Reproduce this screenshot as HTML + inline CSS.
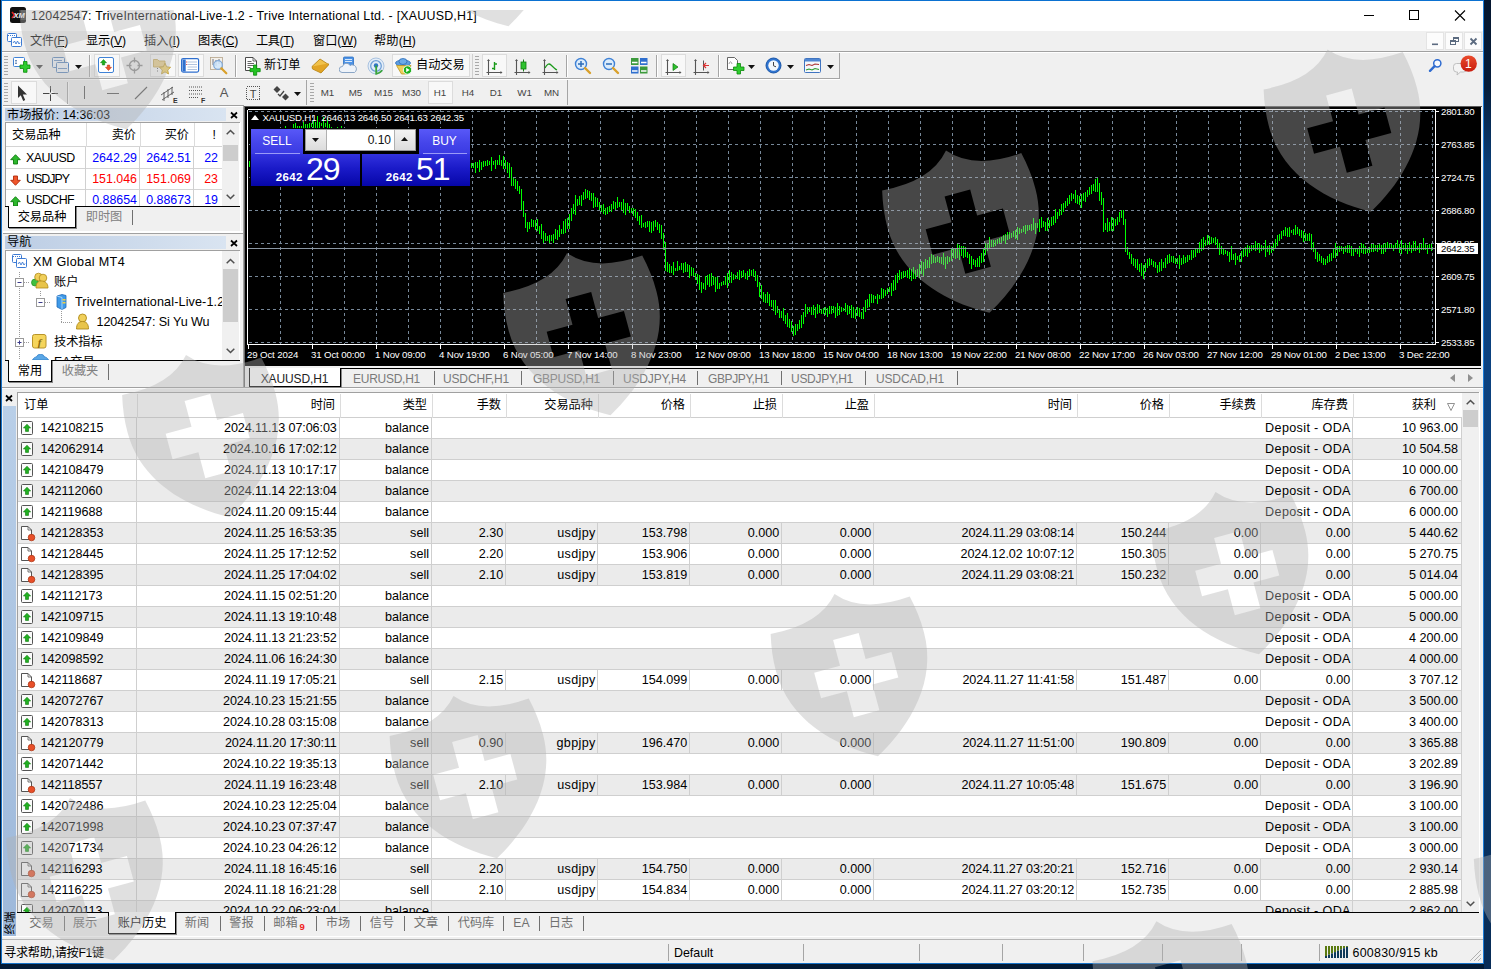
<!DOCTYPE html><html lang="zh"><head><meta charset="utf-8"><title>MT4</title><style>
html,body{margin:0;padding:0}
body{width:1491px;height:969px;position:relative;overflow:hidden;background:#031a34;font-family:"Liberation Sans","Noto Sans CJK SC",sans-serif;}
#root{position:absolute;left:0;top:0;width:1491px;height:969px;overflow:hidden;background:#031a34;}
#root div,#root i,#root span,#root svg{position:absolute;display:block}
.t{white-space:nowrap;font-family:"Liberation Sans","Noto Sans CJK SC",sans-serif;}
.c{font-family:"Liberation Sans",sans-serif;}
.h{height:23px;line-height:23px;font-size:12.200px;color:#000}
.r{height:21px;line-height:21px;font-size:12.600px;color:#000}
u{text-decoration:underline;text-underline-offset:1px}
</style></head><body><div id="root"><div style="left:1484px;top:0px;width:7px;height:969px;background:linear-gradient(180deg,#04162f 0%,#051d3b 9%,#0b3e76 17%,#0c4280 38%,#0a3869 70%,#082c57 100%);"></div><div style="left:2px;top:0px;width:1481px;height:963px;background:#f0f0f0;"></div><i style="left:1px;top:0px;width:1483px;height:1px;background:#0b71d1"></i><i style="left:1px;top:0px;width:1px;height:964px;background:#1672c8"></i><i style="left:1483px;top:0px;width:1px;height:964px;background:#1b7bd6"></i><i style="left:1px;top:963px;width:1483px;height:1px;background:#1672c8"></i>
<div style="left:2px;top:1px;width:1481px;height:30px;background:#fff;"></div><svg style="left:10px;top:7px" width="16" height="16" viewBox="0 0 16 16"><rect x="0" y="0" width="16" height="16" rx="2.5" fill="#111"/><rect x="11" y="3" width="5" height="10" fill="#3a3a3a"/><path d="M2 5 L4.5 8 L2 11" stroke="#e0251b" stroke-width="1.6" fill="none"/><text x="9" y="11" font-size="7.5" font-weight="bold" font-style="italic" fill="#fff" text-anchor="middle" font-family="Liberation Sans,sans-serif">XM</text></svg><span class="t ttl" style="top:6px;height:20px;line-height:20px;font-size:12.4px;color:#000;left:31px;letter-spacing:0.235px;">12042547: TriveInternational-Live-1.2 - Trive International Ltd. - [XAUUSD,H1]</span><svg style="left:1355px;top:5px" width="120" height="22" viewBox="0 0 120 22"><path d="M9 10.5 H19" stroke="#000" stroke-width="1"/><rect x="54.5" y="5.5" width="9" height="9" fill="none" stroke="#000" stroke-width="1"/><path d="M100 5.5 L110 15.5 M110 5.5 L100 15.5" stroke="#000" stroke-width="1.1"/></svg>
<div style="left:2px;top:31px;width:1481px;height:20px;background:#f0f0f0;"></div><svg style="left:7px;top:32px" width="16" height="16" viewBox="0 0 16 16"><rect x="0.5" y="1.5" width="9" height="8" rx="1" fill="#fff" stroke="#3d7bd4"/><path d="M1 3.5h8" stroke="#3d7bd4" stroke-dasharray="1 1"/><rect x="4.5" y="5.5" width="10" height="9" rx="1" fill="#fff" stroke="#3d7bd4"/><path d="M6 11 l1.5 -2 l1.5 3 l1.5 -3 l1.5 3 l1 -1.5" stroke="#3d7bd4" fill="none" stroke-width="0.9"/></svg><span class="t mn" style="top:31px;height:20px;line-height:20px;font-size:12.2px;color:#000;left:30px;letter-spacing:-0.391px;">文件(<u>F</u>)</span><span class="t mn" style="top:31px;height:20px;line-height:20px;font-size:12.2px;color:#000;left:86px;letter-spacing:-0.128px;">显示(<u>V</u>)</span><span class="t mn" style="top:31px;height:20px;line-height:20px;font-size:12.2px;color:#000;left:144px;letter-spacing:0.022px;">插入(<u>I</u>)</span><span class="t mn" style="top:31px;height:20px;line-height:20px;font-size:12.2px;color:#000;left:198px;letter-spacing:-0.263px;">图表(<u>C</u>)</span><span class="t mn" style="top:31px;height:20px;line-height:20px;font-size:12.2px;color:#000;left:256px;letter-spacing:-0.391px;">工具(<u>T</u>)</span><span class="t mn" style="top:31px;height:20px;line-height:20px;font-size:12.2px;color:#000;left:313px;letter-spacing:-0.003px;">窗口(<u>W</u>)</span><span class="t mn" style="top:31px;height:20px;line-height:20px;font-size:12.2px;color:#000;left:374px;letter-spacing:0.138px;">帮助(<u>H</u>)</span><div style="left:1426px;top:32px;width:18px;height:18px;background:#fcfcfc;border:1px solid #e4e4e4;box-sizing:border-box;"></div><div style="left:1445px;top:32px;width:18px;height:18px;background:#fcfcfc;border:1px solid #e4e4e4;box-sizing:border-box;"></div><div style="left:1464px;top:32px;width:18px;height:18px;background:#fcfcfc;border:1px solid #e4e4e4;box-sizing:border-box;"></div><svg style="left:1426.500px;top:32px" width="56" height="18" viewBox="0 0 56 18"><path d="M5 12.300h6" stroke="#5c6b80" stroke-width="1.6"/><g shape-rendering="crispEdges"><rect x="26.500" y="5.500" width="5" height="4" fill="#fcfcfc" stroke="#5c6b80" stroke-width="1"/><rect x="26" y="5" width="6" height="2" fill="#5c6b80"/><rect x="23.500" y="8.500" width="5" height="4" fill="#fcfcfc" stroke="#5c6b80" stroke-width="1"/><rect x="23" y="8" width="6" height="2" fill="#5c6b80"/></g><path d="M43.5 6.5l6 6M49.5 6.5l-6 6" stroke="#5c6b80" stroke-width="1.8"/></svg><i style="left:2px;top:51px;width:1481px;height:1px;background:#a0a0a0"></i><i style="left:2px;top:52px;width:1481px;height:1px;background:#ffffff"></i>
<div style="left:4px;top:56px;width:4px;height:20px;background:repeating-linear-gradient(180deg,#a8a8a8 0,#a8a8a8 1px,transparent 1px,transparent 3px);"></div><svg style="left:13px;top:57px" width="18" height="17" viewBox="0 0 18 17"><rect x="0.5" y="0.5" width="11" height="9" rx="1" fill="#fff" stroke="#3f82d6"/><path d="M3 3v4M2 4l1-1 1 1M2 6l1 1 1-1" stroke="#5a7fb0" stroke-width="0.8" fill="none"/><path d="M8.5 5h3.5v-3.5h3.5v3.5h3v3.5h-3v3.8h-3.5v-3.8h-3.5z" transform="translate(-1.5,3)" fill="#2ecc2e" stroke="#0a8a0a" stroke-width="0.8"/></svg><svg style="left:36px;top:65px" width="7" height="4" viewBox="0 0 7 4"><path d="M0 0h7L3.5 4z" fill="#444"/></svg><svg style="left:52px;top:57px" width="18" height="17" viewBox="0 0 18 17"><rect x="0.5" y="0.5" width="12" height="10" rx="1" fill="#eef3fa" stroke="#5b86bd"/><rect x="4.5" y="5.5" width="12" height="10" rx="1" fill="#eef3fa" stroke="#5b86bd"/><path d="M2 3.5h8M6 11.5h9" stroke="#5b86bd" stroke-width="0.9"/></svg><svg style="left:75px;top:65px" width="7" height="4" viewBox="0 0 7 4"><path d="M0 0h7L3.5 4z" fill="#111"/></svg><i style="left:89px;top:55px;width:1px;height:22px;background:#a5a5a5"></i><i style="left:90px;top:55px;width:1px;height:22px;background:#ffffff"></i><div style="left:94px;top:54px;width:26px;height:23px;background:#f8f8f8;border:1px solid #dcdcdc;box-sizing:border-box;"></div><svg style="left:98px;top:57px" width="17" height="17" viewBox="0 0 17 17"><rect x="0.5" y="0.5" width="15" height="15" rx="1.5" fill="#fff" stroke="#3f82d6"/><path d="M5.5 2.5l3 3.2h-1.8v2.3h-2.4v-2.3h-1.8z" fill="#1db01d" stroke="#0a7a0a" stroke-width="0.5"/><path d="M10.5 13.5l3-3.2h-1.8v-2.3h-2.4v2.3h-1.8z" fill="#f0522a" stroke="#b52a0a" stroke-width="0.5"/></svg><svg style="left:126px;top:57px" width="17" height="17" viewBox="0 0 17 17"><circle cx="8.5" cy="8.5" r="5" fill="none" stroke="#8a8a8a" stroke-width="1.3"/><path d="M8.5 0.5v5M8.5 11.5v5M0.5 8.5h5M11.5 8.5h5" stroke="#8a8a8a" stroke-width="1.3"/></svg><div style="left:150px;top:54px;width:26px;height:23px;background:#f8f8f8;border:1px solid #dcdcdc;box-sizing:border-box;"></div><svg style="left:153px;top:56px" width="19" height="19" viewBox="0 0 19 19"><path d="M0.5 3.5h4l1.5 1.5h6v6h-11.5z" fill="#e9cf8a" stroke="#c2a24a" stroke-width="0.8"/><path d="M12 7.2l1.7 3.6 3.9 0.5-2.9 2.7 0.8 3.9-3.5-2-3.5 2 0.8-3.9-2.9-2.7 3.9-0.5z" fill="#f2d36b" stroke="#b8962e" stroke-width="0.8"/><path d="M4.5 12v5" stroke="#666" stroke-dasharray="1 1.5"/></svg><div style="left:178px;top:54px;width:26px;height:23px;background:#f8f8f8;border:1px solid #dcdcdc;box-sizing:border-box;"></div><svg style="left:181px;top:58px" width="19" height="15" viewBox="0 0 19 15"><rect x="0.6" y="0.6" width="17" height="13.5" rx="1.5" fill="#fff" stroke="#2f6fce" stroke-width="1.2"/><rect x="1.5" y="1.5" width="3.2" height="12" fill="#2f6fce"/><path d="M6.5 4h9.5M6.5 6.5h9.5M6.5 9h9.5M6.5 11.5h9.5" stroke="#9db4d6" stroke-width="0.8"/><path d="M5.2 4h1M5.2 6.500h1" stroke="#d33" stroke-width="1"/></svg><svg style="left:210px;top:57px" width="19" height="19" viewBox="0 0 19 19"><rect x="0.5" y="0.5" width="12" height="12" fill="#f3f0ea" stroke="#b5a58a" stroke-width="0.8"/><path d="M3 2v6M6 3v6M9 2v5" stroke="#667" stroke-width="0.9"/><circle cx="8" cy="8" r="4.3" fill="#cfe6fb" fill-opacity="0.85" stroke="#7fa8d8" stroke-width="1.2"/><path d="M11.3 11.3l5 5" stroke="#d9a02a" stroke-width="2.2" stroke-linecap="round"/></svg><i style="left:235px;top:55px;width:1px;height:22px;background:#a5a5a5"></i><i style="left:236px;top:55px;width:1px;height:22px;background:#ffffff"></i><svg style="left:245px;top:57px" width="19" height="19" viewBox="0 0 19 19"><path d="M0.500 0.500h7.500l3.500 3.500v9.500h-11z" fill="#fdfdfd" stroke="#4a4a4a" stroke-width="1"/><path d="M8 0.500v3.500h3.500" fill="none" stroke="#4a4a4a" stroke-width="0.800"/><path d="M2.500 4.500h4M2.500 6.500h6.500M2.500 8.500h6.500M2.500 10.500h3" stroke="#555" stroke-width="0.900"/><path d="M5 11.500h3.500v-3.500h3.200v3.500h3.500v3.200h-3.500v3.500h-3.200v-3.500h-3.500z" fill="#22c322" stroke="#0a8a0a" stroke-width="0.800"/></svg><span class="t" style="top:54px;height:22px;line-height:22px;font-size:12.2px;color:#000;left:264px;">新订单</span><svg style="left:311px;top:58px" width="19" height="16" viewBox="0 0 19 16"><path d="M1 8.500l8-7.500 8.500 5.500-7.500 8z" fill="#f1c24b" stroke="#b88618" stroke-width="0.9"/><path d="M1 8.500l0.500 2.500 8.500 4 7.500-8-0.200-1.500" fill="#e2a526" stroke="#b88618" stroke-width="0.8"/></svg><svg style="left:339px;top:56px" width="19" height="19" viewBox="0 0 19 19"><rect x="4.500" y="1" width="10" height="10" rx="1" fill="#4d93e6" stroke="#2b6ec2" stroke-width="0.8"/><path d="M6 3.500h7M6 5.500h7" stroke="#d6e8fb" stroke-width="1"/><path d="M3 16.500a3 3 0 0 1 0.500-6 4 4 0 0 1 7.500-1 3.500 3.500 0 0 1 4.500 7z" fill="#eef3f9" stroke="#7e9cc0" stroke-width="0.9"/></svg><svg style="left:367px;top:57px" width="19" height="19" viewBox="0 0 19 19"><circle cx="9" cy="9" r="8" fill="#e3edf8" stroke="#a9c2e0" stroke-width="1"/><circle cx="9" cy="9" r="5.300" fill="none" stroke="#6f9fd6" stroke-width="1.300"/><circle cx="9" cy="8.500" r="2.200" fill="#2f74c6"/><path d="M9.200 8.500v8.300c2.500-0.300 4.500-1.500 6-3.500" fill="none" stroke="#3aa53a" stroke-width="1.800"/></svg><div style="left:392px;top:54px;width:78px;height:23px;background:#f8f8f8;border:1px solid #dcdcdc;box-sizing:border-box;"></div><svg style="left:395px;top:57px" width="19" height="19" viewBox="0 0 19 19"><ellipse cx="8" cy="6" rx="7.500" ry="3" fill="#5d9ee0" stroke="#2d6cb8" stroke-width="0.8"/><ellipse cx="8" cy="4.500" rx="4" ry="3" fill="#6baae8" stroke="#2d6cb8" stroke-width="0.8"/><path d="M1.500 8.500l5 8.500h6l3.500-8.500z" fill="#f0cf5a" stroke="#b89522" stroke-width="0.8"/><circle cx="12.500" cy="13" r="4.200" fill="#1fb11f" stroke="#fff" stroke-width="0.9"/><path d="M11.200 10.800l3.500 2.200-3.500 2.200z" fill="#fff"/></svg><span class="t" style="top:54px;height:22px;line-height:22px;font-size:12.2px;color:#000;left:416px;">自动交易</span><i style="left:472px;top:54px;width:1px;height:24px;background:#cfcfcf"></i><div style="left:475px;top:56px;width:4px;height:20px;background:repeating-linear-gradient(180deg,#a8a8a8 0,#a8a8a8 1px,transparent 1px,transparent 3px);"></div><div style="left:482px;top:54px;width:25px;height:23px;background:#f8f8f8;border:1px solid #dcdcdc;box-sizing:border-box;"></div><svg style="left:486px;top:58.5px" width="17" height="17" viewBox="0 0 17 17"><path d="M2.500 1v15M0.500 13.500h15" stroke="#555" stroke-width="1.1"/><path d="M2.500 0l-1.500 2h3zM16.500 13.500l-2-1.500v3z" fill="#555"/><path d="M8.500 3v8M8.500 5h2.500M6 9.500h2.500" stroke="#1a9a1a" stroke-width="1.4"/></svg><svg style="left:514px;top:58.5px" width="17" height="17" viewBox="0 0 17 17"><path d="M2.500 1v15M0.500 13.500h15" stroke="#555" stroke-width="1.1"/><path d="M2.500 0l-1.500 2h3zM16.500 13.500l-2-1.500v3z" fill="#555"/><path d="M9.500 0.500v12" stroke="#1a7a1a" stroke-width="1"/><rect x="7" y="3" width="5" height="7" fill="#2fc22f" stroke="#0d7a0d" stroke-width="0.8"/></svg><svg style="left:542px;top:58.5px" width="17" height="17" viewBox="0 0 17 17"><path d="M2.500 1v15M0.500 13.500h15" stroke="#555" stroke-width="1.1"/><path d="M2.500 0l-1.500 2h3zM16.500 13.500l-2-1.500v3z" fill="#555"/><path d="M3 9c2-4 4-5 6-3s4 4 6 5" fill="none" stroke="#1a9a1a" stroke-width="1.3"/></svg><i style="left:566px;top:55px;width:1px;height:22px;background:#a5a5a5"></i><i style="left:567px;top:55px;width:1px;height:22px;background:#ffffff"></i><svg style="left:574px;top:57px" width="18" height="18" viewBox="0 0 18 18"><circle cx="7" cy="7" r="5.500" fill="#dcecfb" stroke="#3f82d6" stroke-width="1.400"/><path d="M11 11l5 5" stroke="#d9a02a" stroke-width="2.400" stroke-linecap="round"/><path d="M4 7h6M7 4v6" stroke="#2d6cb8" stroke-width="1.500"/></svg><svg style="left:602px;top:57px" width="18" height="18" viewBox="0 0 18 18"><circle cx="7" cy="7" r="5.500" fill="#dcecfb" stroke="#3f82d6" stroke-width="1.400"/><path d="M11 11l5 5" stroke="#d9a02a" stroke-width="2.400" stroke-linecap="round"/><path d="M4 7h6" stroke="#2d6cb8" stroke-width="1.500"/></svg><svg style="left:631px;top:58px" width="17" height="16" viewBox="0 0 17 16"><rect x="0" y="0" width="7.500" height="7" fill="#3c9a3c"/><rect x="9" y="0" width="7.500" height="7" fill="#2f6fce"/><rect x="0" y="8.500" width="7.500" height="7" fill="#2f6fce"/><rect x="9" y="8.500" width="7.500" height="7" fill="#3c9a3c"/><path d="M1 4.500h5.500M10 4.500h5.500M1 13h5.500M10 13h5.500" stroke="#fff" stroke-width="1.600"/></svg><i style="left:656px;top:55px;width:1px;height:22px;background:#a5a5a5"></i><i style="left:657px;top:55px;width:1px;height:22px;background:#ffffff"></i><div style="left:661px;top:54px;width:25px;height:23px;background:#f8f8f8;border:1px solid #dcdcdc;box-sizing:border-box;"></div><svg style="left:665px;top:58.5px" width="17" height="17" viewBox="0 0 17 17"><path d="M2.500 1v15M0.500 13.500h15" stroke="#555" stroke-width="1.1"/><path d="M2.500 0l-1.500 2h3zM16.500 13.500l-2-1.500v3z" fill="#555"/><path d="M8 4.500l5 3.500-5 3.500z" fill="#2fc22f" stroke="#0d7a0d" stroke-width="0.700"/></svg><svg style="left:693px;top:58.5px" width="17" height="17" viewBox="0 0 17 17"><path d="M2.500 1v15M0.500 13.500h15" stroke="#555" stroke-width="1.1"/><path d="M2.500 0l-1.500 2h3zM16.500 13.500l-2-1.500v3z" fill="#555"/><path d="M10.500 1.500v10" stroke="#555" stroke-width="1"/><path d="M16 6.500h-5M13 4l-2.500 2.500 2.500 2.500" stroke="#d33" stroke-width="1.200" fill="none"/></svg><i style="left:718px;top:55px;width:1px;height:22px;background:#a5a5a5"></i><i style="left:719px;top:55px;width:1px;height:22px;background:#ffffff"></i><svg style="left:727px;top:56px" width="19" height="19" viewBox="0 0 19 19"><path d="M0.500 1.500h7l3 3v9h-10z" fill="#fff" stroke="#555" stroke-width="0.900"/><path d="M2 8c1-3 2-3 3 0" stroke="#888" fill="none" stroke-width="0.800"/><path d="M6.500 11h3.500v-3.500h3.500v3.500h3.500v3.500h-3.500v3.500h-3.500v-3.500h-3.500z" fill="#2ecc2e" stroke="#0a8a0a" stroke-width="0.800"/></svg><svg style="left:748px;top:65px" width="7" height="4" viewBox="0 0 7 4"><path d="M0 0h7L3.5 4z" fill="#111"/></svg><svg style="left:765px;top:57px" width="18" height="18" viewBox="0 0 18 18"><circle cx="8.500" cy="8.500" r="7.500" fill="#2f74d0" stroke="#1a56a8" stroke-width="1"/><circle cx="8.500" cy="8.500" r="5.200" fill="#f4f8fc"/><path d="M8.500 5v3.800l2.500 1" stroke="#444" stroke-width="1" fill="none"/></svg><svg style="left:787px;top:65px" width="7" height="4" viewBox="0 0 7 4"><path d="M0 0h7L3.5 4z" fill="#111"/></svg><svg style="left:804px;top:58px" width="17" height="15" viewBox="0 0 17 15"><rect x="0.500" y="0.500" width="16" height="14" rx="1" fill="#f6f8fb" stroke="#3f74c0" stroke-width="1"/><rect x="1" y="1" width="15" height="2.500" fill="#4f86d2"/><path d="M2 7.500l3-1 3 1 3-1.500 4 0.500" stroke="#a33" stroke-width="1.100" fill="none"/><path d="M2 12l3-1 3 1 3-1.500 4 1" stroke="#2a9a2a" stroke-width="1.100" fill="none"/></svg><svg style="left:827px;top:65px" width="7" height="4" viewBox="0 0 7 4"><path d="M0 0h7L3.5 4z" fill="#111"/></svg><i style="left:839px;top:53px;width:1px;height:26px;background:#a5a5a5"></i><i style="left:475px;top:78px;width:365px;height:1px;background:#a5a5a5"></i><svg style="left:1427px;top:57px" width="18" height="18" viewBox="0 0 18 18"><circle cx="10.300" cy="6.300" r="3.600" fill="#f6f9fe" stroke="#2e6bd0" stroke-width="1.500"/><path d="M7.600 9.200l-4.600 4.600" stroke="#2e6bd0" stroke-width="2.400" stroke-linecap="round"/></svg><svg style="left:1451px;top:54px" width="28" height="24" viewBox="0 0 28 24"><defs><linearGradient id="bdg" x1="0" y1="0" x2="0" y2="1"><stop offset="0" stop-color="#ea4c2c"/><stop offset="1" stop-color="#c81c0e"/></linearGradient></defs><path d="M5.500 9.500h7a3 3 0 0 1 3 3v2.500a3 3 0 0 1-3 3h-3l-3.500 3 0.500-3h-1a3 3 0 0 1-3-3v-2.500a3 3 0 0 1 3-3z" fill="#f4f4f4" stroke="#b9b9b9" stroke-width="0.900"/><circle cx="17.700" cy="9.600" r="8.200" fill="url(#bdg)"/><text x="17.400" y="14" font-size="12" fill="#fff" text-anchor="middle" font-family="Liberation Sans,sans-serif">1</text></svg><i style="left:2px;top:78px;width:473px;height:1px;background:#a5a5a5"></i><i style="left:2px;top:79px;width:838px;height:1px;background:#ffffff"></i>
<div style="left:4px;top:83px;width:4px;height:20px;background:repeating-linear-gradient(180deg,#a8a8a8 0,#a8a8a8 1px,transparent 1px,transparent 3px);"></div><div style="left:11px;top:81px;width:26px;height:23px;background:#f8f8f8;border:1px solid #dcdcdc;box-sizing:border-box;"></div><svg style="left:17px;top:85px" width="12" height="17" viewBox="0 0 12 17"><path d="M1 0.500l9 9h-4.200l2.400 5.500-2 0.900-2.400-5.600-2.800 2.800z" fill="#333"/></svg><svg style="left:42px;top:85px" width="17" height="17" viewBox="0 0 17 17"><path d="M8.500 1v15M1 8.500h15" stroke="#444" stroke-width="1"/><rect x="7.500" y="7.500" width="2" height="2" fill="#f0f0f0"/></svg><i style="left:67px;top:82px;width:1px;height:22px;background:#a5a5a5"></i><i style="left:68px;top:82px;width:1px;height:22px;background:#ffffff"></i><i style="left:84px;top:86px;width:1px;height:13px;background:#555"></i><i style="left:107px;top:93px;width:12px;height:1px;background:#555"></i><svg style="left:134px;top:86px" width="14" height="14" viewBox="0 0 14 14"><path d="M1 13L13 1" stroke="#555" stroke-width="1.100"/></svg><svg style="left:160px;top:85px" width="19" height="19" viewBox="0 0 19 19"><path d="M1 10L13 2M2 15L14 7M4 7v9M8 4v9M12 2v8" stroke="#555" stroke-width="0.900"/><text x="13" y="18" font-size="7" font-weight="bold" fill="#333" font-family="Liberation Sans,sans-serif">E</text></svg><svg style="left:189px;top:86px" width="19" height="18" viewBox="0 0 19 18"><path d="M0 1h13M0 4.500h13M0 8h13M0 11.500h9" stroke="#555" stroke-width="1" stroke-dasharray="1 1"/><text x="12" y="17" font-size="7" font-weight="bold" fill="#333" font-family="Liberation Sans,sans-serif">F</text></svg><span class="t" style="top:82px;height:22px;line-height:22px;font-size:13px;color:#555;left:214.0px;width:20px;text-align:center;">A</span><svg style="left:246px;top:85px" width="15" height="16" viewBox="0 0 15 16"><rect x="0.500" y="1.500" width="13" height="13" fill="none" stroke="#555" stroke-dasharray="1 1" shape-rendering="crispEdges"/><text x="7" y="13" font-size="11" fill="#444" text-anchor="middle" font-family="Liberation Sans,sans-serif">T</text></svg><svg style="left:273px;top:86px" width="17" height="15" viewBox="0 0 17 15"><path d="M4 0l3.500 3.500-3.500 3.500-3.500-3.500z" fill="#444"/><path d="M12.500 7.500l3.500 3.500-3.500 3.500-3.500-3.500z" fill="#444"/><path d="M5 8l2 2 4-5" stroke="#444" stroke-width="1.300" fill="none"/></svg><svg style="left:294px;top:92px" width="7" height="4" viewBox="0 0 7 4"><path d="M0 0h7L3.5 4z" fill="#111"/></svg><i style="left:306px;top:80px;width:1px;height:25px;background:#a5a5a5"></i><div style="left:310px;top:83px;width:4px;height:20px;background:repeating-linear-gradient(180deg,#a8a8a8 0,#a8a8a8 1px,transparent 1px,transparent 3px);"></div><div style="left:428px;top:81px;width:25px;height:23px;background:#f8f8f8;border:1px solid #dcdcdc;box-sizing:border-box;"></div><span class="t" style="top:82px;height:22px;line-height:22px;font-size:9.8px;color:#444;left:312.5px;width:30px;text-align:center;">M1</span><span class="t" style="top:82px;height:22px;line-height:22px;font-size:9.8px;color:#444;left:340.5px;width:30px;text-align:center;">M5</span><span class="t" style="top:82px;height:22px;line-height:22px;font-size:9.8px;color:#444;left:368.5px;width:30px;text-align:center;">M15</span><span class="t" style="top:82px;height:22px;line-height:22px;font-size:9.8px;color:#444;left:396.5px;width:30px;text-align:center;">M30</span><span class="t" style="top:82px;height:22px;line-height:22px;font-size:9.8px;color:#444;left:425.0px;width:30px;text-align:center;">H1</span><span class="t" style="top:82px;height:22px;line-height:22px;font-size:9.8px;color:#444;left:453.0px;width:30px;text-align:center;">H4</span><span class="t" style="top:82px;height:22px;line-height:22px;font-size:9.8px;color:#444;left:481.0px;width:30px;text-align:center;">D1</span><span class="t" style="top:82px;height:22px;line-height:22px;font-size:9.8px;color:#444;left:509.5px;width:30px;text-align:center;">W1</span><span class="t" style="top:82px;height:22px;line-height:22px;font-size:9.8px;color:#444;left:536.5px;width:30px;text-align:center;">MN</span><i style="left:567px;top:80px;width:1px;height:25px;background:#a5a5a5"></i>
<i style="left:3px;top:105px;width:241px;height:1px;background:#a0a0a0"></i><i style="left:3px;top:106px;width:241px;height:1px;background:#fff"></i><div style="left:5px;top:108px;width:221px;height:13px;background:linear-gradient(90deg,#bccde4,#d9e4f1);"></div><span class="t" style="top:106px;height:18px;line-height:18px;font-size:12.2px;color:#000;left:7px;">市场报价: 14:36:03</span><svg style="left:229.5px;top:110.5px" width="8" height="8" viewBox="0 0 8 8"><path d="M1 1.500l6 5.500M7 1.500l-6 5.500" stroke="#000" stroke-width="1.700"/></svg><div style="left:5px;top:122px;width:235px;height:85px;background:#fff;border-left:1px solid #a0a0a0;border-top:1px solid #a0a0a0;box-sizing:border-box;"></div><div style="left:222px;top:123px;width:17px;height:83px;background:#f0f0f0;"></div><svg style="left:226px;top:129px" width="9" height="6" viewBox="0 0 9 6"><path d="M0.700 5.300l3.800-3.800 3.800 3.800" fill="none" stroke="#505050" stroke-width="1.500"/></svg><svg style="left:226px;top:194px" width="9" height="6" viewBox="0 0 9 6"><path d="M0.700 0.700l3.800 3.800 3.800-3.800" fill="none" stroke="#505050" stroke-width="1.500"/></svg><div style="left:223px;top:145px;width:15px;height:16px;background:#cdcdcd;"></div><i style="left:6px;top:146px;width:216px;height:1px;background:#d4d4d4"></i><i style="left:6px;top:168px;width:216px;height:1px;background:#d4d4d4"></i><i style="left:6px;top:189px;width:216px;height:1px;background:#d4d4d4"></i><i style="left:86px;top:123px;width:1px;height:24px;background:#dcdcdc"></i><i style="left:85px;top:147px;width:1px;height:59px;background:#d0d0d0"></i><i style="left:140px;top:123px;width:1px;height:24px;background:#dcdcdc"></i><i style="left:139px;top:147px;width:1px;height:59px;background:#d0d0d0"></i><i style="left:194px;top:123px;width:1px;height:24px;background:#dcdcdc"></i><i style="left:193px;top:147px;width:1px;height:59px;background:#d0d0d0"></i><span class="t" style="top:124px;height:22px;line-height:22px;font-size:12.2px;color:#000;left:12px;">交易品种</span><span class="t" style="top:124px;height:22px;line-height:22px;font-size:12.2px;color:#000;right:1355px;text-align:right;">卖价</span><span class="t" style="top:124px;height:22px;line-height:22px;font-size:12.2px;color:#000;right:1302px;text-align:right;">买价</span><span class="t" style="top:124px;height:22px;line-height:22px;font-size:12.2px;color:#000;right:1275px;text-align:right;">!</span><svg style="left:10px;top:154px" width="11" height="11" viewBox="0 0 11 11"><path d="M5.500 0.700l4.800 5h-2.800v4.300h-4v-4.300h-2.800z" fill="#2db82d" stroke="#0c7a0c" stroke-width="0.900"/></svg><span class="t" style="top:148px;height:21px;line-height:21px;font-size:12.4px;color:#000;left:26px;letter-spacing:-0.507px;">XAUUSD</span><span class="t" style="top:148px;height:21px;line-height:21px;font-size:12.4px;color:#0000ff;right:1354px;text-align:right;">2642.29</span><span class="t" style="top:148px;height:21px;line-height:21px;font-size:12.4px;color:#0000ff;right:1300px;text-align:right;">2642.51</span><span class="t" style="top:148px;height:21px;line-height:21px;font-size:12.4px;color:#0000ff;right:1273px;text-align:right;">22</span><svg style="left:10px;top:175px" width="11" height="11" viewBox="0 0 11 11"><path d="M5.500 10.300l4.800-5h-2.800v-4.300h-4v4.300h-2.800z" fill="#f0552a" stroke="#b02a0a" stroke-width="0.900"/></svg><span class="t" style="top:169px;height:21px;line-height:21px;font-size:12.4px;color:#000;left:26px;letter-spacing:-0.982px;">USDJPY</span><span class="t" style="top:169px;height:21px;line-height:21px;font-size:12.4px;color:#ff0000;right:1354px;text-align:right;">151.046</span><span class="t" style="top:169px;height:21px;line-height:21px;font-size:12.4px;color:#ff0000;right:1300px;text-align:right;">151.069</span><span class="t" style="top:169px;height:21px;line-height:21px;font-size:12.4px;color:#ff0000;right:1273px;text-align:right;">23</span><svg style="left:10px;top:196px" width="11" height="11" viewBox="0 0 11 11"><path d="M5.500 0.700l4.800 5h-2.800v4.300h-4v-4.300h-2.800z" fill="#2db82d" stroke="#0c7a0c" stroke-width="0.900"/></svg><span class="t" style="top:190px;height:21px;line-height:21px;font-size:12.4px;color:#000;left:26px;letter-spacing:-0.607px;">USDCHF</span><span class="t" style="top:190px;height:21px;line-height:21px;font-size:12.4px;color:#0000ff;right:1354px;text-align:right;">0.88654</span><span class="t" style="top:190px;height:21px;line-height:21px;font-size:12.4px;color:#0000ff;right:1300px;text-align:right;">0.88673</span><span class="t" style="top:190px;height:21px;line-height:21px;font-size:12.4px;color:#0000ff;right:1273px;text-align:right;">19</span><div style="left:5px;top:206px;width:235px;height:25px;background:#f0f0f0;"></div><i style="left:5px;top:206px;width:235px;height:1px;background:#000"></i><div style="left:8px;top:206px;width:68px;height:22px;background:#fff;border:1px solid #000;border-top:none;box-sizing:border-box;box-shadow:1px 1px 0 #888;"></div><span class="t" style="top:207px;height:21px;line-height:21px;font-size:12.2px;color:#000;left:9.0px;width:66px;text-align:center;">交易品种</span><span class="t" style="top:207px;height:21px;line-height:21px;font-size:12.2px;color:#808080;left:79.0px;width:50px;text-align:center;">即时图</span><i style="left:132px;top:210px;width:1px;height:15px;background:#707070"></i><i style="left:240px;top:122px;width:1px;height:110px;background:#fff"></i><i style="left:3px;top:231px;width:240px;height:2px;background:#fff"></i><i style="left:3px;top:233px;width:240px;height:1px;background:#a0a0a0"></i><i style="left:243px;top:106px;width:1px;height:281px;background:#a0a0a0"></i><i style="left:244px;top:106px;width:1px;height:281px;background:#696969"></i>
<div style="left:5px;top:236px;width:221px;height:13px;background:linear-gradient(90deg,#bccde4,#d9e4f1);"></div><span class="t" style="top:233px;height:18px;line-height:18px;font-size:12.2px;color:#000;left:7px;">导航</span><svg style="left:229.5px;top:238.5px" width="8" height="8" viewBox="0 0 8 8"><path d="M1 1.500l6 5.500M7 1.500l-6 5.500" stroke="#000" stroke-width="1.700"/></svg><div style="left:5px;top:250px;width:235px;height:111px;background:#fff;border-left:1px solid #a0a0a0;border-top:1px solid #a0a0a0;box-sizing:border-box;"></div><div style="left:222px;top:251px;width:17px;height:109px;background:#f0f0f0;"></div><svg style="left:226px;top:258px" width="9" height="6" viewBox="0 0 9 6"><path d="M0.700 5.300l3.800-3.800 3.800 3.800" fill="none" stroke="#505050" stroke-width="1.500"/></svg><svg style="left:226px;top:348px" width="9" height="6" viewBox="0 0 9 6"><path d="M0.700 0.700l3.800 3.800 3.800-3.800" fill="none" stroke="#505050" stroke-width="1.500"/></svg><div style="left:223px;top:269px;width:15px;height:53px;background:#cdcdcd;"></div><div style="left:19px;top:272px;width:1px;height:90px;background:repeating-linear-gradient(180deg,#9a9a9a 0,#9a9a9a 1px,transparent 1px,transparent 2px);"></div><div style="left:24px;top:282px;width:6px;height:1px;background:repeating-linear-gradient(90deg,#9a9a9a 0,#9a9a9a 1px,transparent 1px,transparent 2px);"></div><div style="left:40px;top:291px;width:1px;height:6px;background:repeating-linear-gradient(180deg,#9a9a9a 0,#9a9a9a 1px,transparent 1px,transparent 2px);"></div><div style="left:45px;top:302px;width:6px;height:1px;background:repeating-linear-gradient(90deg,#9a9a9a 0,#9a9a9a 1px,transparent 1px,transparent 2px);"></div><div style="left:61px;top:311px;width:1px;height:11px;background:repeating-linear-gradient(180deg,#9a9a9a 0,#9a9a9a 1px,transparent 1px,transparent 2px);"></div><div style="left:61px;top:322px;width:11px;height:1px;background:repeating-linear-gradient(90deg,#9a9a9a 0,#9a9a9a 1px,transparent 1px,transparent 2px);"></div><div style="left:24px;top:342px;width:6px;height:1px;background:repeating-linear-gradient(90deg,#9a9a9a 0,#9a9a9a 1px,transparent 1px,transparent 2px);"></div><svg style="left:15px;top:278px" width="9" height="9" viewBox="0 0 9 9"><rect x="0.500" y="0.500" width="8" height="8" fill="#fff" stroke="#9a9a9a"/><path d="M2.500 4.500h4" stroke="#3a3a8a" stroke-width="1"/></svg><svg style="left:36px;top:298px" width="9" height="9" viewBox="0 0 9 9"><rect x="0.500" y="0.500" width="8" height="8" fill="#fff" stroke="#9a9a9a"/><path d="M2.500 4.500h4" stroke="#3a3a8a" stroke-width="1"/></svg><svg style="left:15px;top:338px" width="9" height="9" viewBox="0 0 9 9"><rect x="0.500" y="0.500" width="8" height="8" fill="#fff" stroke="#9a9a9a"/><path d="M2.500 4.500h4" stroke="#3a3a8a" stroke-width="1"/><path d="M4.500 2.500v4" stroke="#3a3a8a" stroke-width="1"/></svg><svg style="left:12px;top:253px" width="16" height="16" viewBox="0 0 16 16"><rect x="0.500" y="1.500" width="9" height="8" rx="1" fill="#fff" stroke="#3d7bd4"/><path d="M1 3.500h8" stroke="#3d7bd4" stroke-dasharray="1 1"/><rect x="4.500" y="5.500" width="10" height="9" rx="1" fill="#fff" stroke="#3d7bd4"/><path d="M6 11l1.500-2 1.500 3 1.500-3 1.500 3 1-1.500" stroke="#3d7bd4" fill="none" stroke-width="0.900"/></svg><svg style="left:31px;top:272px" width="18" height="17" viewBox="0 0 18 17"><circle cx="4" cy="10.500" r="3.500" fill="#3fbf3f" stroke="#1f8a1f" stroke-width="0.700"/><circle cx="7.500" cy="5" r="3.800" fill="#f0cf5a" stroke="#b08a1a" stroke-width="0.800"/><circle cx="12" cy="6" r="3.800" fill="#f0cf5a" stroke="#b08a1a" stroke-width="0.800"/><path d="M5 16c0-5 2-7 5.500-7s6.500 2 6.500 7z" fill="#e8c44a" stroke="#b08a1a" stroke-width="0.800"/></svg><svg style="left:55px;top:294px" width="12" height="16" viewBox="0 0 12 16"><path d="M2 2l5-1.500 4 1v12l-4 2-5-2.500z" fill="#3f9ae8" stroke="#1f6ab8" stroke-width="0.800"/><path d="M2 2l5 1.500v12" fill="none" stroke="#bfe0ff" stroke-width="0.800"/><rect x="7.500" y="5" width="3" height="1.500" fill="#f0d040"/><rect x="7.500" y="8" width="3" height="1.500" fill="#f0d040"/></svg><svg style="left:76px;top:313px" width="13" height="17" viewBox="0 0 13 17"><circle cx="6.500" cy="5" r="4" fill="#f0cf5a" stroke="#b08a1a" stroke-width="0.900"/><path d="M0.500 16c0-5 2-7.500 6-7.500s6 2.500 6 7.500z" fill="#e8c44a" stroke="#b08a1a" stroke-width="0.900"/></svg><svg style="left:32px;top:334px" width="15" height="15" viewBox="0 0 15 15"><rect x="0.500" y="0.500" width="13.500" height="13.500" rx="2" fill="#f5d55c" stroke="#b8942a" stroke-width="1"/><text x="7.500" y="11.500" font-size="11" font-style="italic" font-weight="bold" fill="#8a6a10" text-anchor="middle" font-family="Liberation Serif,serif">f</text></svg><svg style="left:32px;top:354px" width="17" height="6" viewBox="0 0 17 6"><path d="M0.500 6c1-2 2.500-3 4-3c0.500-1.800 2-2.700 4-2.700s3.500 0.900 4 2.700c1.500 0 3 1 4 3z" fill="#5aa7e6" stroke="#2d7cc8" stroke-width="0.800"/></svg><span class="t" style="top:252px;height:20px;line-height:20px;font-size:12.6px;color:#000;left:33px;letter-spacing:0.347px;">XM Global MT4</span><span class="t" style="top:272px;height:20px;line-height:20px;font-size:12.2px;color:#000;left:54px;">账户</span><div style="left:75px;top:292px;width:147px;height:20px;overflow:hidden;"><span class="t" style="left:0;top:0;height:20px;line-height:20px;font-size:12.600px;color:#000;letter-spacing:0.130px">TriveInternational-Live-1.2</span></div><span class="t" style="top:312px;height:20px;line-height:20px;font-size:12.6px;color:#000;left:96.5px;letter-spacing:-0.076px;">12042547: Si Yu Wu</span><span class="t" style="top:332px;height:20px;line-height:20px;font-size:12.2px;color:#000;left:54px;">技术指标</span><div style="left:54px;top:352px;width:100px;height:8px;overflow:hidden;"><span class="t" style="left:0;top:0;height:20px;line-height:20px;font-size:12.200px;color:#000">EA交易</span></div><div style="left:5px;top:360px;width:235px;height:24px;background:#f0f0f0;"></div><i style="left:5px;top:360px;width:235px;height:1px;background:#000"></i><div style="left:8px;top:360px;width:44px;height:22px;background:#fff;border:1px solid #000;border-top:none;box-sizing:border-box;box-shadow:1px 1px 0 #888;"></div><span class="t" style="top:361px;height:21px;line-height:21px;font-size:12.2px;color:#000;left:8.0px;width:44px;text-align:center;">常用</span><span class="t" style="top:361px;height:21px;line-height:21px;font-size:12.2px;color:#808080;left:55.0px;width:50px;text-align:center;">收藏夹</span><i style="left:108px;top:364px;width:1px;height:16px;background:#707070"></i><i style="left:2px;top:387px;width:1481px;height:1px;background:#a0a0a0"></i><i style="left:2px;top:388px;width:1481px;height:1px;background:#fff"></i>
<div style="left:245px;top:107px;width:1236px;height:259px;background:#000;"></div><i style="left:244px;top:106px;width:1238px;height:1px;background:#5a5a5a"></i><svg style="left:0;top:0" width="1491" height="400" viewBox="0 0 1491 400"><path d="M280.5 109V345 M312.5 109V345 M344.5 109V345 M376.5 109V345 M408.5 109V345 M440.5 109V345 M472.5 109V345 M504.5 109V345 M536.5 109V345 M568.5 109V345 M600.5 109V345 M632.5 109V345 M664.5 109V345 M696.5 109V345 M728.5 109V345 M760.5 109V345 M792.5 109V345 M824.5 109V345 M856.5 109V345 M888.5 109V345 M920.5 109V345 M952.5 109V345 M984.5 109V345 M1016.5 109V345 M1048.5 109V345 M1080.5 109V345 M1112.5 109V345 M1144.5 109V345 M1176.5 109V345 M1208.5 109V345 M1240.5 109V345 M1272.5 109V345 M1304.5 109V345 M1336.5 109V345 M1368.5 109V345 M1400.5 109V345 M1432.5 109V345" stroke="#778899" stroke-width="1" stroke-dasharray="3 3" fill="none" shape-rendering="crispEdges"/><path d="M249 111.5H1435 M249 144.5H1435 M249 177.5H1435 M249 210.5H1435 M249 243.5H1435 M249 276.5H1435 M249 309.5H1435 M249 342.5H1435" stroke="#778899" stroke-width="1" stroke-dasharray="3 3" fill="none" shape-rendering="crispEdges"/><path d="M247.500 109.500V344.500H1435.500V109.500M247.500 109.500H1435.500" stroke="#fff" stroke-width="1" fill="none" shape-rendering="crispEdges"/><path d="M248.5 345v4 M312.5 345v4 M376.5 345v4 M440.5 345v4 M504.5 345v4 M568.5 345v4 M632.5 345v4 M696.5 345v4 M760.5 345v4 M824.5 345v4 M888.5 345v4 M952.5 345v4 M1016.5 345v4 M1080.5 345v4 M1144.5 345v4 M1208.5 345v4 M1272.5 345v4 M1336.5 345v4 M1400.5 345v4 M1436 111.5h3 M1436 144.5h3 M1436 177.5h3 M1436 210.5h3 M1436 243.5h3 M1436 276.5h3 M1436 309.5h3 M1436 342.5h3" stroke="#fff" stroke-width="1" shape-rendering="crispEdges"/><path d="M249.5 161V167 M251.5 160V166 M253.5 159V164 M255.5 156V167 M257.5 154V166 M259.5 154V162 M261.5 151V159 M263.5 149V156 M265.5 149V158 M267.5 146V157 M269.5 144V153 M271.5 143V151 M273.5 141V151 M275.5 136V151 M277.5 137V145 M279.5 136V144 M281.5 135V140 M283.5 133V142 M285.5 126V141 M287.5 129V139 M289.5 129V133 M291.5 128V133 M293.5 124V134 M295.5 123V134 M297.5 126V131 M299.5 126V130 M301.5 126V129 M303.5 122V130 M305.5 124V132 M307.5 124V128 M309.5 123V129 M311.5 123V127 M313.5 120V129 M315.5 122V131 M317.5 116V132 M319.5 122V129 M321.5 123V126 M323.5 117V133 M325.5 123V127 M327.5 118V131 M329.5 124V136 M331.5 127V137 M333.5 128V136 M335.5 130V134 M337.5 127V140 M339.5 130V135 M341.5 126V136 M343.5 131V135 M345.5 131V136 M347.5 130V141 M349.5 131V138 M351.5 133V140 M353.5 131V138 M355.5 132V140 M357.5 132V140 M359.5 133V139 M361.5 133V140 M363.5 129V140 M365.5 134V141 M367.5 136V142 M369.5 134V142 M371.5 135V147 M373.5 132V143 M375.5 137V142 M377.5 137V142 M379.5 138V149 M381.5 139V142 M383.5 139V147 M385.5 135V144 M387.5 138V144 M389.5 136V145 M391.5 139V147 M393.5 142V147 M395.5 143V147 M397.5 142V149 M399.5 144V148 M401.5 144V154 M403.5 145V154 M405.5 140V152 M407.5 146V153 M409.5 146V152 M411.5 144V156 M413.5 149V154 M415.5 143V157 M417.5 150V155 M419.5 151V157 M421.5 152V156 M423.5 151V158 M425.5 148V159 M427.5 152V159 M429.5 152V162 M431.5 154V163 M433.5 151V162 M435.5 157V160 M437.5 155V163 M439.5 155V164 M441.5 157V165 M443.5 156V163 M445.5 158V164 M447.5 157V165 M449.5 159V167 M451.5 159V167 M453.5 160V166 M455.5 156V170 M457.5 155V167 M459.5 161V169 M461.5 161V171 M463.5 162V172 M465.5 163V167 M467.5 163V170 M469.5 162V173 M471.5 163V168 M473.5 163V168 M475.5 162V173 M477.5 162V168 M479.5 160V172 M481.5 162V170 M483.5 161V167 M485.5 161V166 M487.5 160V166 M489.5 161V165 M491.5 157V171 M493.5 161V165 M495.5 160V169 M497.5 160V165 M499.5 155V165 M501.5 160V166 M503.5 156V169 M505.5 160V169 M507.5 162V173 M509.5 163V178 M511.5 167V186 M513.5 178V186 M515.5 179V189 M517.5 181V191 M519.5 186V194 M521.5 189V210 M523.5 201V217 M525.5 213V228 M527.5 222V232 M529.5 222V229 M531.5 219V227 M533.5 220V227 M535.5 220V230 M537.5 219V231 M539.5 226V234 M541.5 224V239 M543.5 231V243 M545.5 233V241 M547.5 236V241 M549.5 235V243 M551.5 235V241 M553.5 234V243 M555.5 229V239 M557.5 230V240 M559.5 225V237 M561.5 229V234 M563.5 221V234 M565.5 219V233 M567.5 218V229 M569.5 214V229 M571.5 208V221 M573.5 204V214 M575.5 195V215 M577.5 199V206 M579.5 196V205 M581.5 195V206 M583.5 192V200 M585.5 189V199 M587.5 190V198 M589.5 191V200 M591.5 193V201 M593.5 193V208 M595.5 197V207 M597.5 198V207 M599.5 202V210 M601.5 205V212 M603.5 204V214 M605.5 208V215 M607.5 207V214 M609.5 206V212 M611.5 204V212 M613.5 201V209 M615.5 202V210 M617.5 197V208 M619.5 202V207 M621.5 202V210 M623.5 199V213 M625.5 203V215 M627.5 203V210 M629.5 206V213 M631.5 208V213 M633.5 208V216 M635.5 209V218 M637.5 212V221 M639.5 216V225 M641.5 215V228 M643.5 223V227 M645.5 222V228 M647.5 221V227 M649.5 221V232 M651.5 222V233 M653.5 221V231 M655.5 220V227 M657.5 222V230 M659.5 224V233 M661.5 225V239 M663.5 233V250 M665.5 242V271 M667.5 262V272 M669.5 264V273 M671.5 266V273 M673.5 262V275 M675.5 268V271 M677.5 261V271 M679.5 266V270 M681.5 263V270 M683.5 263V273 M685.5 262V272 M687.5 264V272 M689.5 265V278 M691.5 267V276 M693.5 268V276 M695.5 273V280 M697.5 274V284 M699.5 275V290 M701.5 282V293 M703.5 283V289 M705.5 276V290 M707.5 275V285 M709.5 274V287 M711.5 273V286 M713.5 276V285 M715.5 277V292 M717.5 277V289 M719.5 283V289 M721.5 282V286 M723.5 281V285 M725.5 276V285 M727.5 273V288 M729.5 270V283 M731.5 272V283 M733.5 274V280 M735.5 275V279 M737.5 272V279 M739.5 270V280 M741.5 271V278 M743.5 270V277 M745.5 273V279 M747.5 271V280 M749.5 269V276 M751.5 270V276 M753.5 269V277 M755.5 271V281 M757.5 275V287 M759.5 282V297 M761.5 285V299 M763.5 292V302 M765.5 294V303 M767.5 292V303 M769.5 294V306 M771.5 300V307 M773.5 300V311 M775.5 300V315 M777.5 306V313 M779.5 310V318 M781.5 311V318 M783.5 308V321 M785.5 315V324 M787.5 313V327 M789.5 319V328 M791.5 321V332 M793.5 326V336 M795.5 324V335 M797.5 324V331 M799.5 320V329 M801.5 315V328 M803.5 312V324 M805.5 304V317 M807.5 307V314 M809.5 307V312 M811.5 307V315 M813.5 305V315 M815.5 307V318 M817.5 304V314 M819.5 305V313 M821.5 309V314 M823.5 308V314 M825.5 307V315 M827.5 308V317 M829.5 306V314 M831.5 306V314 M833.5 306V313 M835.5 307V318 M837.5 303V316 M839.5 306V315 M841.5 307V312 M843.5 308V311 M845.5 303V312 M847.5 305V315 M849.5 306V314 M851.5 305V318 M853.5 307V318 M855.5 309V319 M857.5 307V316 M859.5 308V317 M861.5 312V319 M863.5 307V319 M865.5 300V312 M867.5 299V308 M869.5 294V307 M871.5 294V303 M873.5 295V303 M875.5 296V299 M877.5 294V304 M879.5 295V299 M881.5 288V299 M883.5 289V298 M885.5 290V296 M887.5 288V294 M889.5 287V292 M891.5 283V296 M893.5 280V291 M895.5 275V290 M897.5 273V283 M899.5 270V280 M901.5 272V279 M903.5 271V278 M905.5 271V277 M907.5 270V278 M909.5 268V279 M911.5 269V281 M913.5 267V279 M915.5 270V279 M917.5 269V276 M919.5 264V278 M921.5 261V274 M923.5 262V276 M925.5 259V269 M927.5 260V268 M929.5 257V268 M931.5 254V264 M933.5 255V263 M935.5 257V263 M937.5 256V262 M939.5 257V263 M941.5 257V264 M943.5 253V265 M945.5 257V269 M947.5 256V264 M949.5 257V262 M951.5 249V261 M953.5 249V258 M955.5 249V259 M957.5 244V258 M959.5 245V260 M961.5 246V256 M963.5 246V258 M965.5 247V257 M967.5 252V258 M969.5 254V264 M971.5 256V269 M973.5 259V265 M975.5 260V267 M977.5 258V267 M979.5 256V267 M981.5 253V263 M983.5 249V262 M985.5 243V255 M987.5 244V251 M989.5 237V249 M991.5 240V247 M993.5 240V247 M995.5 240V246 M997.5 239V244 M999.5 238V243 M1001.5 237V243 M1003.5 235V241 M1005.5 234V244 M1007.5 232V240 M1009.5 232V239 M1011.5 233V238 M1013.5 231V237 M1015.5 230V239 M1017.5 227V240 M1019.5 228V234 M1021.5 229V233 M1023.5 226V232 M1025.5 225V234 M1027.5 225V231 M1029.5 225V230 M1031.5 224V231 M1033.5 218V230 M1035.5 223V234 M1037.5 223V228 M1039.5 219V232 M1041.5 217V228 M1043.5 221V227 M1045.5 222V231 M1047.5 218V231 M1049.5 220V228 M1051.5 217V226 M1053.5 216V225 M1055.5 209V223 M1057.5 212V219 M1059.5 209V216 M1061.5 204V215 M1063.5 203V212 M1065.5 201V208 M1067.5 198V206 M1069.5 195V204 M1071.5 193V201 M1073.5 194V199 M1075.5 190V203 M1077.5 195V204 M1079.5 196V205 M1081.5 194V208 M1083.5 193V201 M1085.5 192V202 M1087.5 190V197 M1089.5 187V195 M1091.5 185V194 M1093.5 184V191 M1095.5 179V192 M1097.5 178V192 M1099.5 183V201 M1101.5 192V205 M1103.5 198V232 M1105.5 223V230 M1107.5 218V232 M1109.5 222V231 M1111.5 217V231 M1113.5 218V231 M1115.5 219V226 M1117.5 217V225 M1119.5 212V222 M1121.5 210V218 M1123.5 210V225 M1125.5 219V252 M1127.5 247V255 M1129.5 252V259 M1131.5 254V264 M1133.5 258V266 M1135.5 259V268 M1137.5 259V270 M1139.5 264V272 M1141.5 263V276 M1143.5 265V279 M1145.5 263V272 M1147.5 259V268 M1149.5 258V266 M1151.5 259V265 M1153.5 261V267 M1155.5 262V268 M1157.5 265V273 M1159.5 262V272 M1161.5 259V271 M1163.5 262V268 M1165.5 258V268 M1167.5 255V264 M1169.5 254V263 M1171.5 256V262 M1173.5 256V263 M1175.5 258V264 M1177.5 258V264 M1179.5 255V269 M1181.5 258V265 M1183.5 255V264 M1185.5 257V263 M1187.5 255V262 M1189.5 255V260 M1191.5 250V260 M1193.5 250V258 M1195.5 249V257 M1197.5 248V253 M1199.5 242V253 M1201.5 239V251 M1203.5 237V250 M1205.5 240V246 M1207.5 235V245 M1209.5 236V245 M1211.5 237V244 M1213.5 238V243 M1215.5 237V245 M1217.5 239V249 M1219.5 243V255 M1221.5 246V254 M1223.5 248V255 M1225.5 250V254 M1227.5 251V256 M1229.5 252V262 M1231.5 246V260 M1233.5 254V260 M1235.5 253V265 M1237.5 256V260 M1239.5 255V262 M1241.5 251V262 M1243.5 249V257 M1245.5 247V256 M1247.5 245V257 M1249.5 246V253 M1251.5 245V251 M1253.5 245V250 M1255.5 241V251 M1257.5 243V250 M1259.5 243V253 M1261.5 245V251 M1263.5 246V250 M1265.5 240V257 M1267.5 246V252 M1269.5 245V255 M1271.5 246V253 M1273.5 243V251 M1275.5 239V249 M1277.5 235V246 M1279.5 234V241 M1281.5 231V239 M1283.5 230V236 M1285.5 227V236 M1287.5 228V237 M1289.5 227V237 M1291.5 230V233 M1293.5 229V235 M1295.5 225V235 M1297.5 227V234 M1299.5 229V236 M1301.5 230V238 M1303.5 231V242 M1305.5 233V241 M1307.5 234V241 M1309.5 233V241 M1311.5 234V250 M1313.5 242V252 M1315.5 248V259 M1317.5 252V262 M1319.5 254V261 M1321.5 256V263 M1323.5 258V265 M1325.5 259V265 M1327.5 256V263 M1329.5 254V262 M1331.5 253V261 M1333.5 249V258 M1335.5 243V258 M1337.5 246V256 M1339.5 246V252 M1341.5 246V251 M1343.5 247V254 M1345.5 246V252 M1347.5 245V253 M1349.5 245V253 M1351.5 246V256 M1353.5 248V256 M1355.5 249V252 M1357.5 248V254 M1359.5 246V257 M1361.5 243V253 M1363.5 244V254 M1365.5 246V254 M1367.5 248V253 M1369.5 247V253 M1371.5 244V252 M1373.5 244V252 M1375.5 245V251 M1377.5 245V252 M1379.5 244V250 M1381.5 245V254 M1383.5 244V254 M1385.5 243V252 M1387.5 242V249 M1389.5 244V249 M1391.5 244V248 M1393.5 245V251 M1395.5 243V249 M1397.5 240V249 M1399.5 244V253 M1401.5 240V254 M1403.5 245V250 M1405.5 243V251 M1407.5 245V254 M1409.5 242V251 M1411.5 245V253 M1413.5 241V251 M1415.5 241V251 M1417.5 246V250 M1419.5 244V253 M1421.5 244V250 M1423.5 238V250 M1425.5 244V250 M1427.5 245V254 M1429.5 244V248 M1431.5 244V251" stroke="#00ff00" stroke-width="1" shape-rendering="crispEdges"/><path d="M248 248.500H1435" stroke="#8a96a3" stroke-width="1" shape-rendering="crispEdges"/></svg><span class="t c" style="top:105.5px;height:12px;line-height:12px;font-size:9.7px;color:#fff;left:1441px;letter-spacing:-0.250px;">2801.80</span><span class="t c" style="top:138.5px;height:12px;line-height:12px;font-size:9.7px;color:#fff;left:1441px;letter-spacing:-0.250px;">2763.85</span><span class="t c" style="top:171.5px;height:12px;line-height:12px;font-size:9.7px;color:#fff;left:1441px;letter-spacing:-0.250px;">2724.75</span><span class="t c" style="top:204.5px;height:12px;line-height:12px;font-size:9.7px;color:#fff;left:1441px;letter-spacing:-0.250px;">2686.80</span><span class="t c" style="top:237.5px;height:12px;line-height:12px;font-size:9.7px;color:#fff;left:1441px;letter-spacing:-0.250px;">2648.85</span><span class="t c" style="top:270.5px;height:12px;line-height:12px;font-size:9.7px;color:#fff;left:1441px;letter-spacing:-0.250px;">2609.75</span><span class="t c" style="top:303.5px;height:12px;line-height:12px;font-size:9.7px;color:#fff;left:1441px;letter-spacing:-0.250px;">2571.80</span><span class="t c" style="top:336.5px;height:12px;line-height:12px;font-size:9.7px;color:#fff;left:1441px;letter-spacing:-0.250px;">2533.85</span><div style="left:1437px;top:243px;width:41px;height:11px;background:#fff;"></div><span class="t c" style="top:242px;height:13px;line-height:13px;font-size:9.7px;color:#000;left:1441px;letter-spacing:-0.250px;">2642.35</span><span class="t c" style="top:349px;height:12px;line-height:12px;font-size:9.7px;color:#fff;left:247px;letter-spacing:-0.150px;">29 Oct 2024</span><span class="t c" style="top:349px;height:12px;line-height:12px;font-size:9.7px;color:#fff;left:311px;letter-spacing:-0.150px;">31 Oct 00:00</span><span class="t c" style="top:349px;height:12px;line-height:12px;font-size:9.7px;color:#fff;left:375px;letter-spacing:-0.150px;">1 Nov 09:00</span><span class="t c" style="top:349px;height:12px;line-height:12px;font-size:9.7px;color:#fff;left:439px;letter-spacing:-0.150px;">4 Nov 19:00</span><span class="t c" style="top:349px;height:12px;line-height:12px;font-size:9.7px;color:#fff;left:503px;letter-spacing:-0.150px;">6 Nov 05:00</span><span class="t c" style="top:349px;height:12px;line-height:12px;font-size:9.7px;color:#fff;left:567px;letter-spacing:-0.150px;">7 Nov 14:00</span><span class="t c" style="top:349px;height:12px;line-height:12px;font-size:9.7px;color:#fff;left:631px;letter-spacing:-0.150px;">8 Nov 23:00</span><span class="t c" style="top:349px;height:12px;line-height:12px;font-size:9.7px;color:#fff;left:695px;letter-spacing:-0.150px;">12 Nov 09:00</span><span class="t c" style="top:349px;height:12px;line-height:12px;font-size:9.7px;color:#fff;left:759px;letter-spacing:-0.150px;">13 Nov 18:00</span><span class="t c" style="top:349px;height:12px;line-height:12px;font-size:9.7px;color:#fff;left:823px;letter-spacing:-0.150px;">15 Nov 04:00</span><span class="t c" style="top:349px;height:12px;line-height:12px;font-size:9.7px;color:#fff;left:887px;letter-spacing:-0.150px;">18 Nov 13:00</span><span class="t c" style="top:349px;height:12px;line-height:12px;font-size:9.7px;color:#fff;left:951px;letter-spacing:-0.150px;">19 Nov 22:00</span><span class="t c" style="top:349px;height:12px;line-height:12px;font-size:9.7px;color:#fff;left:1015px;letter-spacing:-0.150px;">21 Nov 08:00</span><span class="t c" style="top:349px;height:12px;line-height:12px;font-size:9.7px;color:#fff;left:1079px;letter-spacing:-0.150px;">22 Nov 17:00</span><span class="t c" style="top:349px;height:12px;line-height:12px;font-size:9.7px;color:#fff;left:1143px;letter-spacing:-0.150px;">26 Nov 03:00</span><span class="t c" style="top:349px;height:12px;line-height:12px;font-size:9.7px;color:#fff;left:1207px;letter-spacing:-0.150px;">27 Nov 12:00</span><span class="t c" style="top:349px;height:12px;line-height:12px;font-size:9.7px;color:#fff;left:1271px;letter-spacing:-0.150px;">29 Nov 01:00</span><span class="t c" style="top:349px;height:12px;line-height:12px;font-size:9.7px;color:#fff;left:1335px;letter-spacing:-0.150px;">2 Dec 13:00</span><span class="t c" style="top:349px;height:12px;line-height:12px;font-size:9.7px;color:#fff;left:1399px;letter-spacing:-0.150px;">3 Dec 22:00</span><svg style="left:251px;top:115px" width="8" height="5" viewBox="0 0 8 5"><path d="M0 5L4 0L8 5z" fill="#fff"/></svg><span class="t c" style="top:111px;height:13px;line-height:13px;font-size:9.7px;color:#fff;left:262.5px;letter-spacing:-0.178px;">XAUUSD,H1&nbsp; 2646.13 2646.50 2641.63 2642.35</span><div style="left:250px;top:128px;width:221px;height:59px;background:#000;"></div><div style="left:251px;top:129px;width:52px;height:25px;background:linear-gradient(180deg,#5858f8 0%,#4545ea 55%,#3a3ae2 100%);"></div><div style="left:419px;top:129px;width:51px;height:25px;background:linear-gradient(180deg,#5858f8 0%,#4545ea 55%,#3a3ae2 100%);"></div><div style="left:251px;top:154px;width:109px;height:32px;background:linear-gradient(180deg,#3232de 0%,#1a1ac8 45%,#0606a8 100%);"></div><div style="left:362px;top:154px;width:108px;height:32px;background:linear-gradient(180deg,#3232de 0%,#1a1ac8 45%,#0606a8 100%);"></div><i style="left:255px;top:153px;width:45px;height:1px;background:#9a9af8"></i><i style="left:423px;top:153px;width:44px;height:1px;background:#9a9af8"></i><span class="t" style="top:131px;height:20px;line-height:20px;font-size:12px;color:#fff;left:252.0px;width:50px;text-align:center;">SELL</span><span class="t" style="top:131px;height:20px;line-height:20px;font-size:12px;color:#fff;left:419.5px;width:50px;text-align:center;">BUY</span><div style="left:305px;top:129px;width:111px;height:22px;background:#fff;border:1px solid #9a9a9a;box-sizing:border-box;"></div><div style="left:306px;top:130px;width:21px;height:20px;background:linear-gradient(180deg,#f2f2f2,#dcdcdc);border-right:1px solid #b0b0b0;box-sizing:border-box;"></div><div style="left:394px;top:130px;width:21px;height:20px;background:linear-gradient(180deg,#f2f2f2,#dcdcdc);border-left:1px solid #b0b0b0;box-sizing:border-box;"></div><svg style="left:312px;top:138px" width="7" height="4" viewBox="0 0 7 4"><path d="M0 0h7L3.500 4z" fill="#111"/></svg><svg style="left:401px;top:137px" width="7" height="4" viewBox="0 0 7 4"><path d="M0 4h7L3.500 0z" fill="#111"/></svg><span class="t" style="top:130px;height:20px;line-height:20px;font-size:12px;color:#111;right:1100px;text-align:right;">0.10</span><span class="t" style="top:169px;height:16px;line-height:16px;font-size:11.5px;color:#fff;right:1188.5px;text-align:right;font-weight:bold;letter-spacing:0.400px;margin-right:-0.400px;">2642</span><span class="t" style="top:151px;height:36px;line-height:36px;font-size:32px;color:#fff;left:306px;letter-spacing:-1px;">29</span><span class="t" style="top:169px;height:16px;line-height:16px;font-size:11.5px;color:#fff;right:1078.5px;text-align:right;font-weight:bold;letter-spacing:0.400px;margin-right:-0.400px;">2642</span><span class="t" style="top:151px;height:36px;line-height:36px;font-size:32px;color:#fff;left:416px;letter-spacing:-1px;">51</span>
<div style="left:245px;top:366px;width:1238px;height:21px;background:#f0f0f0;"></div><i style="left:340px;top:368px;width:1141px;height:1px;background:#000"></i><div style="left:249px;top:368px;width:92px;height:19px;background:#fff;border:1px solid #000;border-top:none;box-sizing:border-box;box-shadow:1px 1px 0 #888;"></div><span class="t" style="top:370px;height:18px;line-height:18px;font-size:12px;color:#222;left:249.5px;width:90px;text-align:center;letter-spacing:-0.132px;">XAUUSD,H1</span><span class="t" style="top:370px;height:18px;line-height:18px;font-size:12px;color:#7a7a7a;left:353px;letter-spacing:-0.262px;">EURUSD,H1</span><i style="left:434px;top:371px;width:1px;height:14px;background:#707070"></i><span class="t" style="top:370px;height:18px;line-height:18px;font-size:12px;color:#7a7a7a;left:443px;letter-spacing:-0.149px;">USDCHF,H1</span><i style="left:521px;top:371px;width:1px;height:14px;background:#707070"></i><span class="t" style="top:370px;height:18px;line-height:18px;font-size:12px;color:#7a7a7a;left:533px;letter-spacing:-0.262px;">GBPUSD,H1</span><i style="left:613px;top:371px;width:1px;height:14px;background:#707070"></i><span class="t" style="top:370px;height:18px;line-height:18px;font-size:12px;color:#7a7a7a;left:623px;letter-spacing:-0.165px;">USDJPY,H4</span><i style="left:697px;top:371px;width:1px;height:14px;background:#707070"></i><span class="t" style="top:370px;height:18px;line-height:18px;font-size:12px;color:#7a7a7a;left:708px;letter-spacing:-0.387px;">GBPJPY,H1</span><i style="left:781px;top:371px;width:1px;height:14px;background:#707070"></i><span class="t" style="top:370px;height:18px;line-height:18px;font-size:12px;color:#7a7a7a;left:791px;letter-spacing:-0.276px;">USDJPY,H1</span><i style="left:865px;top:371px;width:1px;height:14px;background:#707070"></i><span class="t" style="top:370px;height:18px;line-height:18px;font-size:12px;color:#7a7a7a;left:876px;letter-spacing:-0.151px;">USDCAD,H1</span><i style="left:957px;top:371px;width:1px;height:14px;background:#707070"></i><svg style="left:1450px;top:374px" width="25" height="8" viewBox="0 0 25 8"><path d="M5 0v8L0 4z M18 0v8l5-4z" fill="#909090"/></svg>
<div style="left:3px;top:406px;width:13px;height:531px;background:linear-gradient(180deg,#b9cfe8,#9db8da);"></div><svg style="left:5px;top:394px" width="8" height="8" viewBox="0 0 8 8"><path d="M1 1.500l6 5.500M7 1.500l-6 5.500" stroke="#000" stroke-width="1.700"/></svg><span class="t" style="left:-9.500px;top:915.500px;width:38px;height:14px;line-height:14px;font-size:11.500px;color:#000;transform:rotate(-90deg);text-align:center;">终端</span><div style="left:17px;top:392px;width:1445px;height:520px;overflow:hidden;background:#fff;border-left:1px solid #a0a0a0;border-top:1px solid #a0a0a0;box-sizing:content-box;"><div style="left:0;top:0;width:1445px;height:25px;background:#fff;"></div><div style="left:0;top:25px;width:1444px;height:20px;background:#fff;"></div><div style="left:0;top:46px;width:1444px;height:20px;background:#ebebeb;"></div><div style="left:0;top:67px;width:1444px;height:20px;background:#fff;"></div><div style="left:0;top:88px;width:1444px;height:20px;background:#ebebeb;"></div><div style="left:0;top:109px;width:1444px;height:20px;background:#fff;"></div><div style="left:0;top:130px;width:1444px;height:20px;background:#ebebeb;"></div><div style="left:0;top:151px;width:1444px;height:20px;background:#fff;"></div><div style="left:0;top:172px;width:1444px;height:20px;background:#ebebeb;"></div><div style="left:0;top:193px;width:1444px;height:20px;background:#fff;"></div><div style="left:0;top:214px;width:1444px;height:20px;background:#ebebeb;"></div><div style="left:0;top:235px;width:1444px;height:20px;background:#fff;"></div><div style="left:0;top:256px;width:1444px;height:20px;background:#ebebeb;"></div><div style="left:0;top:277px;width:1444px;height:20px;background:#fff;"></div><div style="left:0;top:298px;width:1444px;height:20px;background:#ebebeb;"></div><div style="left:0;top:319px;width:1444px;height:20px;background:#fff;"></div><div style="left:0;top:340px;width:1444px;height:20px;background:#ebebeb;"></div><div style="left:0;top:361px;width:1444px;height:20px;background:#fff;"></div><div style="left:0;top:382px;width:1444px;height:20px;background:#ebebeb;"></div><div style="left:0;top:403px;width:1444px;height:20px;background:#fff;"></div><div style="left:0;top:424px;width:1444px;height:20px;background:#ebebeb;"></div><div style="left:0;top:445px;width:1444px;height:20px;background:#fff;"></div><div style="left:0;top:466px;width:1444px;height:20px;background:#ebebeb;"></div><div style="left:0;top:487px;width:1444px;height:20px;background:#fff;"></div><div style="left:0;top:508px;width:1444px;height:20px;background:#ebebeb;"></div><i style="left:0;top:24px;width:1444px;height:1px;background:#cfcfcf"></i><i style="left:0;top:45px;width:1444px;height:1px;background:#cfcfcf"></i><i style="left:0;top:66px;width:1444px;height:1px;background:#cfcfcf"></i><i style="left:0;top:87px;width:1444px;height:1px;background:#cfcfcf"></i><i style="left:0;top:108px;width:1444px;height:1px;background:#cfcfcf"></i><i style="left:0;top:129px;width:1444px;height:1px;background:#cfcfcf"></i><i style="left:0;top:150px;width:1444px;height:1px;background:#cfcfcf"></i><i style="left:0;top:171px;width:1444px;height:1px;background:#cfcfcf"></i><i style="left:0;top:192px;width:1444px;height:1px;background:#cfcfcf"></i><i style="left:0;top:213px;width:1444px;height:1px;background:#cfcfcf"></i><i style="left:0;top:234px;width:1444px;height:1px;background:#cfcfcf"></i><i style="left:0;top:255px;width:1444px;height:1px;background:#cfcfcf"></i><i style="left:0;top:276px;width:1444px;height:1px;background:#cfcfcf"></i><i style="left:0;top:297px;width:1444px;height:1px;background:#cfcfcf"></i><i style="left:0;top:318px;width:1444px;height:1px;background:#cfcfcf"></i><i style="left:0;top:339px;width:1444px;height:1px;background:#cfcfcf"></i><i style="left:0;top:360px;width:1444px;height:1px;background:#cfcfcf"></i><i style="left:0;top:381px;width:1444px;height:1px;background:#cfcfcf"></i><i style="left:0;top:402px;width:1444px;height:1px;background:#cfcfcf"></i><i style="left:0;top:423px;width:1444px;height:1px;background:#cfcfcf"></i><i style="left:0;top:444px;width:1444px;height:1px;background:#cfcfcf"></i><i style="left:0;top:465px;width:1444px;height:1px;background:#cfcfcf"></i><i style="left:0;top:486px;width:1444px;height:1px;background:#cfcfcf"></i><i style="left:0;top:507px;width:1444px;height:1px;background:#cfcfcf"></i><i style="left:0;top:528px;width:1444px;height:1px;background:#cfcfcf"></i><i style="left:119px;top:1px;width:1px;height:24px;background:#dcdcdc"></i><i style="left:322px;top:1px;width:1px;height:24px;background:#dcdcdc"></i><i style="left:414px;top:1px;width:1px;height:24px;background:#dcdcdc"></i><i style="left:488px;top:1px;width:1px;height:24px;background:#dcdcdc"></i><i style="left:580px;top:1px;width:1px;height:24px;background:#dcdcdc"></i><i style="left:672px;top:1px;width:1px;height:24px;background:#dcdcdc"></i><i style="left:764px;top:1px;width:1px;height:24px;background:#dcdcdc"></i><i style="left:856px;top:1px;width:1px;height:24px;background:#dcdcdc"></i><i style="left:1059px;top:1px;width:1px;height:24px;background:#dcdcdc"></i><i style="left:1151px;top:1px;width:1px;height:24px;background:#dcdcdc"></i><i style="left:1243px;top:1px;width:1px;height:24px;background:#dcdcdc"></i><i style="left:1335px;top:1px;width:1px;height:24px;background:#dcdcdc"></i><i style="left:1444px;top:1px;width:1px;height:24px;background:#dcdcdc"></i><i style="left:118px;top:25px;width:1px;height:20px;background:#cfcfcf"></i><i style="left:321px;top:25px;width:1px;height:20px;background:#cfcfcf"></i><i style="left:413px;top:25px;width:1px;height:20px;background:#cfcfcf"></i><i style="left:1334px;top:25px;width:1px;height:20px;background:#cfcfcf"></i><i style="left:1443px;top:25px;width:1px;height:20px;background:#cfcfcf"></i><i style="left:118px;top:46px;width:1px;height:20px;background:#cfcfcf"></i><i style="left:321px;top:46px;width:1px;height:20px;background:#cfcfcf"></i><i style="left:413px;top:46px;width:1px;height:20px;background:#cfcfcf"></i><i style="left:1334px;top:46px;width:1px;height:20px;background:#cfcfcf"></i><i style="left:1443px;top:46px;width:1px;height:20px;background:#cfcfcf"></i><i style="left:118px;top:67px;width:1px;height:20px;background:#cfcfcf"></i><i style="left:321px;top:67px;width:1px;height:20px;background:#cfcfcf"></i><i style="left:413px;top:67px;width:1px;height:20px;background:#cfcfcf"></i><i style="left:1334px;top:67px;width:1px;height:20px;background:#cfcfcf"></i><i style="left:1443px;top:67px;width:1px;height:20px;background:#cfcfcf"></i><i style="left:118px;top:88px;width:1px;height:20px;background:#cfcfcf"></i><i style="left:321px;top:88px;width:1px;height:20px;background:#cfcfcf"></i><i style="left:413px;top:88px;width:1px;height:20px;background:#cfcfcf"></i><i style="left:1334px;top:88px;width:1px;height:20px;background:#cfcfcf"></i><i style="left:1443px;top:88px;width:1px;height:20px;background:#cfcfcf"></i><i style="left:118px;top:109px;width:1px;height:20px;background:#cfcfcf"></i><i style="left:321px;top:109px;width:1px;height:20px;background:#cfcfcf"></i><i style="left:413px;top:109px;width:1px;height:20px;background:#cfcfcf"></i><i style="left:1334px;top:109px;width:1px;height:20px;background:#cfcfcf"></i><i style="left:1443px;top:109px;width:1px;height:20px;background:#cfcfcf"></i><i style="left:118px;top:130px;width:1px;height:20px;background:#cfcfcf"></i><i style="left:321px;top:130px;width:1px;height:20px;background:#cfcfcf"></i><i style="left:413px;top:130px;width:1px;height:20px;background:#cfcfcf"></i><i style="left:487px;top:130px;width:1px;height:20px;background:#cfcfcf"></i><i style="left:579px;top:130px;width:1px;height:20px;background:#cfcfcf"></i><i style="left:671px;top:130px;width:1px;height:20px;background:#cfcfcf"></i><i style="left:763px;top:130px;width:1px;height:20px;background:#cfcfcf"></i><i style="left:855px;top:130px;width:1px;height:20px;background:#cfcfcf"></i><i style="left:1058px;top:130px;width:1px;height:20px;background:#cfcfcf"></i><i style="left:1150px;top:130px;width:1px;height:20px;background:#cfcfcf"></i><i style="left:1242px;top:130px;width:1px;height:20px;background:#cfcfcf"></i><i style="left:1334px;top:130px;width:1px;height:20px;background:#cfcfcf"></i><i style="left:1443px;top:130px;width:1px;height:20px;background:#cfcfcf"></i><i style="left:118px;top:151px;width:1px;height:20px;background:#cfcfcf"></i><i style="left:321px;top:151px;width:1px;height:20px;background:#cfcfcf"></i><i style="left:413px;top:151px;width:1px;height:20px;background:#cfcfcf"></i><i style="left:487px;top:151px;width:1px;height:20px;background:#cfcfcf"></i><i style="left:579px;top:151px;width:1px;height:20px;background:#cfcfcf"></i><i style="left:671px;top:151px;width:1px;height:20px;background:#cfcfcf"></i><i style="left:763px;top:151px;width:1px;height:20px;background:#cfcfcf"></i><i style="left:855px;top:151px;width:1px;height:20px;background:#cfcfcf"></i><i style="left:1058px;top:151px;width:1px;height:20px;background:#cfcfcf"></i><i style="left:1150px;top:151px;width:1px;height:20px;background:#cfcfcf"></i><i style="left:1242px;top:151px;width:1px;height:20px;background:#cfcfcf"></i><i style="left:1334px;top:151px;width:1px;height:20px;background:#cfcfcf"></i><i style="left:1443px;top:151px;width:1px;height:20px;background:#cfcfcf"></i><i style="left:118px;top:172px;width:1px;height:20px;background:#cfcfcf"></i><i style="left:321px;top:172px;width:1px;height:20px;background:#cfcfcf"></i><i style="left:413px;top:172px;width:1px;height:20px;background:#cfcfcf"></i><i style="left:487px;top:172px;width:1px;height:20px;background:#cfcfcf"></i><i style="left:579px;top:172px;width:1px;height:20px;background:#cfcfcf"></i><i style="left:671px;top:172px;width:1px;height:20px;background:#cfcfcf"></i><i style="left:763px;top:172px;width:1px;height:20px;background:#cfcfcf"></i><i style="left:855px;top:172px;width:1px;height:20px;background:#cfcfcf"></i><i style="left:1058px;top:172px;width:1px;height:20px;background:#cfcfcf"></i><i style="left:1150px;top:172px;width:1px;height:20px;background:#cfcfcf"></i><i style="left:1242px;top:172px;width:1px;height:20px;background:#cfcfcf"></i><i style="left:1334px;top:172px;width:1px;height:20px;background:#cfcfcf"></i><i style="left:1443px;top:172px;width:1px;height:20px;background:#cfcfcf"></i><i style="left:118px;top:193px;width:1px;height:20px;background:#cfcfcf"></i><i style="left:321px;top:193px;width:1px;height:20px;background:#cfcfcf"></i><i style="left:413px;top:193px;width:1px;height:20px;background:#cfcfcf"></i><i style="left:1334px;top:193px;width:1px;height:20px;background:#cfcfcf"></i><i style="left:1443px;top:193px;width:1px;height:20px;background:#cfcfcf"></i><i style="left:118px;top:214px;width:1px;height:20px;background:#cfcfcf"></i><i style="left:321px;top:214px;width:1px;height:20px;background:#cfcfcf"></i><i style="left:413px;top:214px;width:1px;height:20px;background:#cfcfcf"></i><i style="left:1334px;top:214px;width:1px;height:20px;background:#cfcfcf"></i><i style="left:1443px;top:214px;width:1px;height:20px;background:#cfcfcf"></i><i style="left:118px;top:235px;width:1px;height:20px;background:#cfcfcf"></i><i style="left:321px;top:235px;width:1px;height:20px;background:#cfcfcf"></i><i style="left:413px;top:235px;width:1px;height:20px;background:#cfcfcf"></i><i style="left:1334px;top:235px;width:1px;height:20px;background:#cfcfcf"></i><i style="left:1443px;top:235px;width:1px;height:20px;background:#cfcfcf"></i><i style="left:118px;top:256px;width:1px;height:20px;background:#cfcfcf"></i><i style="left:321px;top:256px;width:1px;height:20px;background:#cfcfcf"></i><i style="left:413px;top:256px;width:1px;height:20px;background:#cfcfcf"></i><i style="left:1334px;top:256px;width:1px;height:20px;background:#cfcfcf"></i><i style="left:1443px;top:256px;width:1px;height:20px;background:#cfcfcf"></i><i style="left:118px;top:277px;width:1px;height:20px;background:#cfcfcf"></i><i style="left:321px;top:277px;width:1px;height:20px;background:#cfcfcf"></i><i style="left:413px;top:277px;width:1px;height:20px;background:#cfcfcf"></i><i style="left:487px;top:277px;width:1px;height:20px;background:#cfcfcf"></i><i style="left:579px;top:277px;width:1px;height:20px;background:#cfcfcf"></i><i style="left:671px;top:277px;width:1px;height:20px;background:#cfcfcf"></i><i style="left:763px;top:277px;width:1px;height:20px;background:#cfcfcf"></i><i style="left:855px;top:277px;width:1px;height:20px;background:#cfcfcf"></i><i style="left:1058px;top:277px;width:1px;height:20px;background:#cfcfcf"></i><i style="left:1150px;top:277px;width:1px;height:20px;background:#cfcfcf"></i><i style="left:1242px;top:277px;width:1px;height:20px;background:#cfcfcf"></i><i style="left:1334px;top:277px;width:1px;height:20px;background:#cfcfcf"></i><i style="left:1443px;top:277px;width:1px;height:20px;background:#cfcfcf"></i><i style="left:118px;top:298px;width:1px;height:20px;background:#cfcfcf"></i><i style="left:321px;top:298px;width:1px;height:20px;background:#cfcfcf"></i><i style="left:413px;top:298px;width:1px;height:20px;background:#cfcfcf"></i><i style="left:1334px;top:298px;width:1px;height:20px;background:#cfcfcf"></i><i style="left:1443px;top:298px;width:1px;height:20px;background:#cfcfcf"></i><i style="left:118px;top:319px;width:1px;height:20px;background:#cfcfcf"></i><i style="left:321px;top:319px;width:1px;height:20px;background:#cfcfcf"></i><i style="left:413px;top:319px;width:1px;height:20px;background:#cfcfcf"></i><i style="left:1334px;top:319px;width:1px;height:20px;background:#cfcfcf"></i><i style="left:1443px;top:319px;width:1px;height:20px;background:#cfcfcf"></i><i style="left:118px;top:340px;width:1px;height:20px;background:#cfcfcf"></i><i style="left:321px;top:340px;width:1px;height:20px;background:#cfcfcf"></i><i style="left:413px;top:340px;width:1px;height:20px;background:#cfcfcf"></i><i style="left:487px;top:340px;width:1px;height:20px;background:#cfcfcf"></i><i style="left:579px;top:340px;width:1px;height:20px;background:#cfcfcf"></i><i style="left:671px;top:340px;width:1px;height:20px;background:#cfcfcf"></i><i style="left:763px;top:340px;width:1px;height:20px;background:#cfcfcf"></i><i style="left:855px;top:340px;width:1px;height:20px;background:#cfcfcf"></i><i style="left:1058px;top:340px;width:1px;height:20px;background:#cfcfcf"></i><i style="left:1150px;top:340px;width:1px;height:20px;background:#cfcfcf"></i><i style="left:1242px;top:340px;width:1px;height:20px;background:#cfcfcf"></i><i style="left:1334px;top:340px;width:1px;height:20px;background:#cfcfcf"></i><i style="left:1443px;top:340px;width:1px;height:20px;background:#cfcfcf"></i><i style="left:118px;top:361px;width:1px;height:20px;background:#cfcfcf"></i><i style="left:321px;top:361px;width:1px;height:20px;background:#cfcfcf"></i><i style="left:413px;top:361px;width:1px;height:20px;background:#cfcfcf"></i><i style="left:1334px;top:361px;width:1px;height:20px;background:#cfcfcf"></i><i style="left:1443px;top:361px;width:1px;height:20px;background:#cfcfcf"></i><i style="left:118px;top:382px;width:1px;height:20px;background:#cfcfcf"></i><i style="left:321px;top:382px;width:1px;height:20px;background:#cfcfcf"></i><i style="left:413px;top:382px;width:1px;height:20px;background:#cfcfcf"></i><i style="left:487px;top:382px;width:1px;height:20px;background:#cfcfcf"></i><i style="left:579px;top:382px;width:1px;height:20px;background:#cfcfcf"></i><i style="left:671px;top:382px;width:1px;height:20px;background:#cfcfcf"></i><i style="left:763px;top:382px;width:1px;height:20px;background:#cfcfcf"></i><i style="left:855px;top:382px;width:1px;height:20px;background:#cfcfcf"></i><i style="left:1058px;top:382px;width:1px;height:20px;background:#cfcfcf"></i><i style="left:1150px;top:382px;width:1px;height:20px;background:#cfcfcf"></i><i style="left:1242px;top:382px;width:1px;height:20px;background:#cfcfcf"></i><i style="left:1334px;top:382px;width:1px;height:20px;background:#cfcfcf"></i><i style="left:1443px;top:382px;width:1px;height:20px;background:#cfcfcf"></i><i style="left:118px;top:403px;width:1px;height:20px;background:#cfcfcf"></i><i style="left:321px;top:403px;width:1px;height:20px;background:#cfcfcf"></i><i style="left:413px;top:403px;width:1px;height:20px;background:#cfcfcf"></i><i style="left:1334px;top:403px;width:1px;height:20px;background:#cfcfcf"></i><i style="left:1443px;top:403px;width:1px;height:20px;background:#cfcfcf"></i><i style="left:118px;top:424px;width:1px;height:20px;background:#cfcfcf"></i><i style="left:321px;top:424px;width:1px;height:20px;background:#cfcfcf"></i><i style="left:413px;top:424px;width:1px;height:20px;background:#cfcfcf"></i><i style="left:1334px;top:424px;width:1px;height:20px;background:#cfcfcf"></i><i style="left:1443px;top:424px;width:1px;height:20px;background:#cfcfcf"></i><i style="left:118px;top:445px;width:1px;height:20px;background:#cfcfcf"></i><i style="left:321px;top:445px;width:1px;height:20px;background:#cfcfcf"></i><i style="left:413px;top:445px;width:1px;height:20px;background:#cfcfcf"></i><i style="left:1334px;top:445px;width:1px;height:20px;background:#cfcfcf"></i><i style="left:1443px;top:445px;width:1px;height:20px;background:#cfcfcf"></i><i style="left:118px;top:466px;width:1px;height:20px;background:#cfcfcf"></i><i style="left:321px;top:466px;width:1px;height:20px;background:#cfcfcf"></i><i style="left:413px;top:466px;width:1px;height:20px;background:#cfcfcf"></i><i style="left:487px;top:466px;width:1px;height:20px;background:#cfcfcf"></i><i style="left:579px;top:466px;width:1px;height:20px;background:#cfcfcf"></i><i style="left:671px;top:466px;width:1px;height:20px;background:#cfcfcf"></i><i style="left:763px;top:466px;width:1px;height:20px;background:#cfcfcf"></i><i style="left:855px;top:466px;width:1px;height:20px;background:#cfcfcf"></i><i style="left:1058px;top:466px;width:1px;height:20px;background:#cfcfcf"></i><i style="left:1150px;top:466px;width:1px;height:20px;background:#cfcfcf"></i><i style="left:1242px;top:466px;width:1px;height:20px;background:#cfcfcf"></i><i style="left:1334px;top:466px;width:1px;height:20px;background:#cfcfcf"></i><i style="left:1443px;top:466px;width:1px;height:20px;background:#cfcfcf"></i><i style="left:118px;top:487px;width:1px;height:20px;background:#cfcfcf"></i><i style="left:321px;top:487px;width:1px;height:20px;background:#cfcfcf"></i><i style="left:413px;top:487px;width:1px;height:20px;background:#cfcfcf"></i><i style="left:487px;top:487px;width:1px;height:20px;background:#cfcfcf"></i><i style="left:579px;top:487px;width:1px;height:20px;background:#cfcfcf"></i><i style="left:671px;top:487px;width:1px;height:20px;background:#cfcfcf"></i><i style="left:763px;top:487px;width:1px;height:20px;background:#cfcfcf"></i><i style="left:855px;top:487px;width:1px;height:20px;background:#cfcfcf"></i><i style="left:1058px;top:487px;width:1px;height:20px;background:#cfcfcf"></i><i style="left:1150px;top:487px;width:1px;height:20px;background:#cfcfcf"></i><i style="left:1242px;top:487px;width:1px;height:20px;background:#cfcfcf"></i><i style="left:1334px;top:487px;width:1px;height:20px;background:#cfcfcf"></i><i style="left:1443px;top:487px;width:1px;height:20px;background:#cfcfcf"></i><i style="left:118px;top:508px;width:1px;height:20px;background:#cfcfcf"></i><i style="left:321px;top:508px;width:1px;height:20px;background:#cfcfcf"></i><i style="left:413px;top:508px;width:1px;height:20px;background:#cfcfcf"></i><i style="left:1334px;top:508px;width:1px;height:20px;background:#cfcfcf"></i><i style="left:1443px;top:508px;width:1px;height:20px;background:#cfcfcf"></i><span class="t h" style="left:6px;top:1px">订单</span><span class="t h" style="right:1128px;top:1px;text-align:right">时间</span><span class="t h" style="right:1036px;top:1px;text-align:right">类型</span><span class="t h" style="right:962px;top:1px;text-align:right">手数</span><span class="t h" style="right:870px;top:1px;text-align:right">交易品种</span><span class="t h" style="right:778px;top:1px;text-align:right">价格</span><span class="t h" style="right:686px;top:1px;text-align:right">止损</span><span class="t h" style="right:594px;top:1px;text-align:right">止盈</span><span class="t h" style="right:391px;top:1px;text-align:right">时间</span><span class="t h" style="right:299px;top:1px;text-align:right">价格</span><span class="t h" style="right:207px;top:1px;text-align:right">手续费</span><span class="t h" style="right:115px;top:1px;text-align:right">库存费</span><span class="t h" style="right:27px;top:1px;text-align:right">获利</span><svg style="left:1429px;top:10px" width="8" height="8" viewBox="0 0 8 8"><path d="M0.500 0.500h7L4 7.500z" fill="none" stroke="#777" stroke-width="0.800"/></svg><svg style="left:3px;top:28px" width="12" height="14" viewBox="0 0 12 14"><rect x="0.500" y="0.500" width="11" height="13" rx="1" fill="#fbfbfb" stroke="#555" stroke-width="1"/><path d="M6 3.200l3.600 3.800h-2.100v3.400h-3v-3.400h-2.100z" fill="#22b022" stroke="#0a7a0a" stroke-width="0.600"/></svg><span class="t r" style="left:22.5px;top:25px">142108215</span><span class="t r" style="right:1126.2px;top:25px;text-align:right;letter-spacing:-0.100px;margin-right:0.100px;">2024.11.13 07:06:03</span><span class="t r" style="right:1034px;top:25px;text-align:right;">balance</span><span class="t r" style="right:112.5px;top:25px;text-align:right;letter-spacing:0.350px;margin-right:-0.350px;">Deposit - ODA</span><span class="t r" style="right:5px;top:25px;text-align:right;">10 963.00</span><svg style="left:3px;top:49px" width="12" height="14" viewBox="0 0 12 14"><rect x="0.500" y="0.500" width="11" height="13" rx="1" fill="#fbfbfb" stroke="#555" stroke-width="1"/><path d="M6 3.200l3.600 3.800h-2.100v3.400h-3v-3.400h-2.100z" fill="#22b022" stroke="#0a7a0a" stroke-width="0.600"/></svg><span class="t r" style="left:22.5px;top:46px">142062914</span><span class="t r" style="right:1126.2px;top:46px;text-align:right;letter-spacing:-0.100px;margin-right:0.100px;">2024.10.16 17:02:12</span><span class="t r" style="right:1034px;top:46px;text-align:right;">balance</span><span class="t r" style="right:112.5px;top:46px;text-align:right;letter-spacing:0.350px;margin-right:-0.350px;">Deposit - ODA</span><span class="t r" style="right:5px;top:46px;text-align:right;">10 504.58</span><svg style="left:3px;top:70px" width="12" height="14" viewBox="0 0 12 14"><rect x="0.500" y="0.500" width="11" height="13" rx="1" fill="#fbfbfb" stroke="#555" stroke-width="1"/><path d="M6 3.200l3.600 3.800h-2.100v3.400h-3v-3.400h-2.100z" fill="#22b022" stroke="#0a7a0a" stroke-width="0.600"/></svg><span class="t r" style="left:22.5px;top:67px">142108479</span><span class="t r" style="right:1126.2px;top:67px;text-align:right;letter-spacing:-0.100px;margin-right:0.100px;">2024.11.13 10:17:17</span><span class="t r" style="right:1034px;top:67px;text-align:right;">balance</span><span class="t r" style="right:112.5px;top:67px;text-align:right;letter-spacing:0.350px;margin-right:-0.350px;">Deposit - ODA</span><span class="t r" style="right:5px;top:67px;text-align:right;">10 000.00</span><svg style="left:3px;top:91px" width="12" height="14" viewBox="0 0 12 14"><rect x="0.500" y="0.500" width="11" height="13" rx="1" fill="#fbfbfb" stroke="#555" stroke-width="1"/><path d="M6 3.200l3.600 3.800h-2.100v3.400h-3v-3.400h-2.100z" fill="#22b022" stroke="#0a7a0a" stroke-width="0.600"/></svg><span class="t r" style="left:22.5px;top:88px">142112060</span><span class="t r" style="right:1126.2px;top:88px;text-align:right;letter-spacing:-0.100px;margin-right:0.100px;">2024.11.14 22:13:04</span><span class="t r" style="right:1034px;top:88px;text-align:right;">balance</span><span class="t r" style="right:112.5px;top:88px;text-align:right;letter-spacing:0.350px;margin-right:-0.350px;">Deposit - ODA</span><span class="t r" style="right:5px;top:88px;text-align:right;">6 700.00</span><svg style="left:3px;top:112px" width="12" height="14" viewBox="0 0 12 14"><rect x="0.500" y="0.500" width="11" height="13" rx="1" fill="#fbfbfb" stroke="#555" stroke-width="1"/><path d="M6 3.200l3.600 3.800h-2.100v3.400h-3v-3.400h-2.100z" fill="#22b022" stroke="#0a7a0a" stroke-width="0.600"/></svg><span class="t r" style="left:22.5px;top:109px">142119688</span><span class="t r" style="right:1126.2px;top:109px;text-align:right;letter-spacing:-0.100px;margin-right:0.100px;">2024.11.20 09:15:44</span><span class="t r" style="right:1034px;top:109px;text-align:right;">balance</span><span class="t r" style="right:112.5px;top:109px;text-align:right;letter-spacing:0.350px;margin-right:-0.350px;">Deposit - ODA</span><span class="t r" style="right:5px;top:109px;text-align:right;">6 000.00</span><svg style="left:3px;top:133px" width="15" height="16" viewBox="0 0 15 16"><path d="M0.500 0.500h6.500l3.500 3.500v9.500h-10z" fill="#fff" stroke="#555" stroke-width="1"/><path d="M7 0.500v3.500h3.500" fill="none" stroke="#555" stroke-width="0.800"/><circle cx="10.500" cy="11.500" r="3.300" fill="#e8502a" stroke="#a8300f" stroke-width="0.700"/></svg><span class="t r" style="left:22.5px;top:130px">142128353</span><span class="t r" style="right:1126.2px;top:130px;text-align:right;letter-spacing:-0.100px;margin-right:0.100px;">2024.11.25 16:53:35</span><span class="t r" style="right:1034px;top:130px;text-align:right;">sell</span><span class="t r" style="right:959.7px;top:130px;text-align:right;">2.30</span><span class="t r" style="right:867.7px;top:130px;text-align:right;letter-spacing:0.350px;margin-right:-0.350px;">usdjpy</span><span class="t r" style="right:775.7px;top:130px;text-align:right;">153.798</span><span class="t r" style="right:683.7px;top:130px;text-align:right;">0.000</span><span class="t r" style="right:591.7px;top:130px;text-align:right;">0.000</span><span class="t r" style="right:388.70000000000005px;top:130px;text-align:right;letter-spacing:-0.100px;margin-right:0.100px;">2024.11.29 03:08:14</span><span class="t r" style="right:296.70000000000005px;top:130px;text-align:right;">150.244</span><span class="t r" style="right:204.70000000000005px;top:130px;text-align:right;">0.00</span><span class="t r" style="right:112.70000000000005px;top:130px;text-align:right;">0.00</span><span class="t r" style="right:5px;top:130px;text-align:right;">5 440.62</span><svg style="left:3px;top:154px" width="15" height="16" viewBox="0 0 15 16"><path d="M0.500 0.500h6.500l3.500 3.500v9.500h-10z" fill="#fff" stroke="#555" stroke-width="1"/><path d="M7 0.500v3.500h3.500" fill="none" stroke="#555" stroke-width="0.800"/><circle cx="10.500" cy="11.500" r="3.300" fill="#e8502a" stroke="#a8300f" stroke-width="0.700"/></svg><span class="t r" style="left:22.5px;top:151px">142128445</span><span class="t r" style="right:1126.2px;top:151px;text-align:right;letter-spacing:-0.100px;margin-right:0.100px;">2024.11.25 17:12:52</span><span class="t r" style="right:1034px;top:151px;text-align:right;">sell</span><span class="t r" style="right:959.7px;top:151px;text-align:right;">2.20</span><span class="t r" style="right:867.7px;top:151px;text-align:right;letter-spacing:0.350px;margin-right:-0.350px;">usdjpy</span><span class="t r" style="right:775.7px;top:151px;text-align:right;">153.906</span><span class="t r" style="right:683.7px;top:151px;text-align:right;">0.000</span><span class="t r" style="right:591.7px;top:151px;text-align:right;">0.000</span><span class="t r" style="right:388.70000000000005px;top:151px;text-align:right;letter-spacing:-0.100px;margin-right:0.100px;">2024.12.02 10:07:12</span><span class="t r" style="right:296.70000000000005px;top:151px;text-align:right;">150.305</span><span class="t r" style="right:204.70000000000005px;top:151px;text-align:right;">0.00</span><span class="t r" style="right:112.70000000000005px;top:151px;text-align:right;">0.00</span><span class="t r" style="right:5px;top:151px;text-align:right;">5 270.75</span><svg style="left:3px;top:175px" width="15" height="16" viewBox="0 0 15 16"><path d="M0.500 0.500h6.500l3.500 3.500v9.500h-10z" fill="#fff" stroke="#555" stroke-width="1"/><path d="M7 0.500v3.500h3.500" fill="none" stroke="#555" stroke-width="0.800"/><circle cx="10.500" cy="11.500" r="3.300" fill="#e8502a" stroke="#a8300f" stroke-width="0.700"/></svg><span class="t r" style="left:22.5px;top:172px">142128395</span><span class="t r" style="right:1126.2px;top:172px;text-align:right;letter-spacing:-0.100px;margin-right:0.100px;">2024.11.25 17:04:02</span><span class="t r" style="right:1034px;top:172px;text-align:right;">sell</span><span class="t r" style="right:959.7px;top:172px;text-align:right;">2.10</span><span class="t r" style="right:867.7px;top:172px;text-align:right;letter-spacing:0.350px;margin-right:-0.350px;">usdjpy</span><span class="t r" style="right:775.7px;top:172px;text-align:right;">153.819</span><span class="t r" style="right:683.7px;top:172px;text-align:right;">0.000</span><span class="t r" style="right:591.7px;top:172px;text-align:right;">0.000</span><span class="t r" style="right:388.70000000000005px;top:172px;text-align:right;letter-spacing:-0.100px;margin-right:0.100px;">2024.11.29 03:08:21</span><span class="t r" style="right:296.70000000000005px;top:172px;text-align:right;">150.232</span><span class="t r" style="right:204.70000000000005px;top:172px;text-align:right;">0.00</span><span class="t r" style="right:112.70000000000005px;top:172px;text-align:right;">0.00</span><span class="t r" style="right:5px;top:172px;text-align:right;">5 014.04</span><svg style="left:3px;top:196px" width="12" height="14" viewBox="0 0 12 14"><rect x="0.500" y="0.500" width="11" height="13" rx="1" fill="#fbfbfb" stroke="#555" stroke-width="1"/><path d="M6 3.200l3.600 3.800h-2.100v3.400h-3v-3.400h-2.100z" fill="#22b022" stroke="#0a7a0a" stroke-width="0.600"/></svg><span class="t r" style="left:22.5px;top:193px">142112173</span><span class="t r" style="right:1126.2px;top:193px;text-align:right;letter-spacing:-0.100px;margin-right:0.100px;">2024.11.15 02:51:20</span><span class="t r" style="right:1034px;top:193px;text-align:right;">balance</span><span class="t r" style="right:112.5px;top:193px;text-align:right;letter-spacing:0.350px;margin-right:-0.350px;">Deposit - ODA</span><span class="t r" style="right:5px;top:193px;text-align:right;">5 000.00</span><svg style="left:3px;top:217px" width="12" height="14" viewBox="0 0 12 14"><rect x="0.500" y="0.500" width="11" height="13" rx="1" fill="#fbfbfb" stroke="#555" stroke-width="1"/><path d="M6 3.200l3.600 3.800h-2.100v3.400h-3v-3.400h-2.100z" fill="#22b022" stroke="#0a7a0a" stroke-width="0.600"/></svg><span class="t r" style="left:22.5px;top:214px">142109715</span><span class="t r" style="right:1126.2px;top:214px;text-align:right;letter-spacing:-0.100px;margin-right:0.100px;">2024.11.13 19:10:48</span><span class="t r" style="right:1034px;top:214px;text-align:right;">balance</span><span class="t r" style="right:112.5px;top:214px;text-align:right;letter-spacing:0.350px;margin-right:-0.350px;">Deposit - ODA</span><span class="t r" style="right:5px;top:214px;text-align:right;">5 000.00</span><svg style="left:3px;top:238px" width="12" height="14" viewBox="0 0 12 14"><rect x="0.500" y="0.500" width="11" height="13" rx="1" fill="#fbfbfb" stroke="#555" stroke-width="1"/><path d="M6 3.200l3.600 3.800h-2.100v3.400h-3v-3.400h-2.100z" fill="#22b022" stroke="#0a7a0a" stroke-width="0.600"/></svg><span class="t r" style="left:22.5px;top:235px">142109849</span><span class="t r" style="right:1126.2px;top:235px;text-align:right;letter-spacing:-0.100px;margin-right:0.100px;">2024.11.13 21:23:52</span><span class="t r" style="right:1034px;top:235px;text-align:right;">balance</span><span class="t r" style="right:112.5px;top:235px;text-align:right;letter-spacing:0.350px;margin-right:-0.350px;">Deposit - ODA</span><span class="t r" style="right:5px;top:235px;text-align:right;">4 200.00</span><svg style="left:3px;top:259px" width="12" height="14" viewBox="0 0 12 14"><rect x="0.500" y="0.500" width="11" height="13" rx="1" fill="#fbfbfb" stroke="#555" stroke-width="1"/><path d="M6 3.200l3.600 3.800h-2.100v3.400h-3v-3.400h-2.100z" fill="#22b022" stroke="#0a7a0a" stroke-width="0.600"/></svg><span class="t r" style="left:22.5px;top:256px">142098592</span><span class="t r" style="right:1126.2px;top:256px;text-align:right;letter-spacing:-0.100px;margin-right:0.100px;">2024.11.06 16:24:30</span><span class="t r" style="right:1034px;top:256px;text-align:right;">balance</span><span class="t r" style="right:112.5px;top:256px;text-align:right;letter-spacing:0.350px;margin-right:-0.350px;">Deposit - ODA</span><span class="t r" style="right:5px;top:256px;text-align:right;">4 000.00</span><svg style="left:3px;top:280px" width="15" height="16" viewBox="0 0 15 16"><path d="M0.500 0.500h6.500l3.500 3.500v9.500h-10z" fill="#fff" stroke="#555" stroke-width="1"/><path d="M7 0.500v3.500h3.500" fill="none" stroke="#555" stroke-width="0.800"/><circle cx="10.500" cy="11.500" r="3.300" fill="#e8502a" stroke="#a8300f" stroke-width="0.700"/></svg><span class="t r" style="left:22.5px;top:277px">142118687</span><span class="t r" style="right:1126.2px;top:277px;text-align:right;letter-spacing:-0.100px;margin-right:0.100px;">2024.11.19 17:05:21</span><span class="t r" style="right:1034px;top:277px;text-align:right;">sell</span><span class="t r" style="right:959.7px;top:277px;text-align:right;">2.15</span><span class="t r" style="right:867.7px;top:277px;text-align:right;letter-spacing:0.350px;margin-right:-0.350px;">usdjpy</span><span class="t r" style="right:775.7px;top:277px;text-align:right;">154.099</span><span class="t r" style="right:683.7px;top:277px;text-align:right;">0.000</span><span class="t r" style="right:591.7px;top:277px;text-align:right;">0.000</span><span class="t r" style="right:388.70000000000005px;top:277px;text-align:right;letter-spacing:-0.100px;margin-right:0.100px;">2024.11.27 11:41:58</span><span class="t r" style="right:296.70000000000005px;top:277px;text-align:right;">151.487</span><span class="t r" style="right:204.70000000000005px;top:277px;text-align:right;">0.00</span><span class="t r" style="right:112.70000000000005px;top:277px;text-align:right;">0.00</span><span class="t r" style="right:5px;top:277px;text-align:right;">3 707.12</span><svg style="left:3px;top:301px" width="12" height="14" viewBox="0 0 12 14"><rect x="0.500" y="0.500" width="11" height="13" rx="1" fill="#fbfbfb" stroke="#555" stroke-width="1"/><path d="M6 3.200l3.600 3.800h-2.100v3.400h-3v-3.400h-2.100z" fill="#22b022" stroke="#0a7a0a" stroke-width="0.600"/></svg><span class="t r" style="left:22.5px;top:298px">142072767</span><span class="t r" style="right:1126.2px;top:298px;text-align:right;letter-spacing:-0.100px;margin-right:0.100px;">2024.10.23 15:21:55</span><span class="t r" style="right:1034px;top:298px;text-align:right;">balance</span><span class="t r" style="right:112.5px;top:298px;text-align:right;letter-spacing:0.350px;margin-right:-0.350px;">Deposit - ODA</span><span class="t r" style="right:5px;top:298px;text-align:right;">3 500.00</span><svg style="left:3px;top:322px" width="12" height="14" viewBox="0 0 12 14"><rect x="0.500" y="0.500" width="11" height="13" rx="1" fill="#fbfbfb" stroke="#555" stroke-width="1"/><path d="M6 3.200l3.600 3.800h-2.100v3.400h-3v-3.400h-2.100z" fill="#22b022" stroke="#0a7a0a" stroke-width="0.600"/></svg><span class="t r" style="left:22.5px;top:319px">142078313</span><span class="t r" style="right:1126.2px;top:319px;text-align:right;letter-spacing:-0.100px;margin-right:0.100px;">2024.10.28 03:15:08</span><span class="t r" style="right:1034px;top:319px;text-align:right;">balance</span><span class="t r" style="right:112.5px;top:319px;text-align:right;letter-spacing:0.350px;margin-right:-0.350px;">Deposit - ODA</span><span class="t r" style="right:5px;top:319px;text-align:right;">3 400.00</span><svg style="left:3px;top:343px" width="15" height="16" viewBox="0 0 15 16"><path d="M0.500 0.500h6.500l3.500 3.500v9.500h-10z" fill="#fff" stroke="#555" stroke-width="1"/><path d="M7 0.500v3.500h3.500" fill="none" stroke="#555" stroke-width="0.800"/><circle cx="10.500" cy="11.500" r="3.300" fill="#e8502a" stroke="#a8300f" stroke-width="0.700"/></svg><span class="t r" style="left:22.5px;top:340px">142120779</span><span class="t r" style="right:1126.2px;top:340px;text-align:right;letter-spacing:-0.100px;margin-right:0.100px;">2024.11.20 17:30:11</span><span class="t r" style="right:1034px;top:340px;text-align:right;">sell</span><span class="t r" style="right:959.7px;top:340px;text-align:right;">0.90</span><span class="t r" style="right:867.7px;top:340px;text-align:right;letter-spacing:0.350px;margin-right:-0.350px;">gbpjpy</span><span class="t r" style="right:775.7px;top:340px;text-align:right;">196.470</span><span class="t r" style="right:683.7px;top:340px;text-align:right;">0.000</span><span class="t r" style="right:591.7px;top:340px;text-align:right;">0.000</span><span class="t r" style="right:388.70000000000005px;top:340px;text-align:right;letter-spacing:-0.100px;margin-right:0.100px;">2024.11.27 11:51:00</span><span class="t r" style="right:296.70000000000005px;top:340px;text-align:right;">190.809</span><span class="t r" style="right:204.70000000000005px;top:340px;text-align:right;">0.00</span><span class="t r" style="right:112.70000000000005px;top:340px;text-align:right;">0.00</span><span class="t r" style="right:5px;top:340px;text-align:right;">3 365.88</span><svg style="left:3px;top:364px" width="12" height="14" viewBox="0 0 12 14"><rect x="0.500" y="0.500" width="11" height="13" rx="1" fill="#fbfbfb" stroke="#555" stroke-width="1"/><path d="M6 3.200l3.600 3.800h-2.100v3.400h-3v-3.400h-2.100z" fill="#22b022" stroke="#0a7a0a" stroke-width="0.600"/></svg><span class="t r" style="left:22.5px;top:361px">142071442</span><span class="t r" style="right:1126.2px;top:361px;text-align:right;letter-spacing:-0.100px;margin-right:0.100px;">2024.10.22 19:35:13</span><span class="t r" style="right:1034px;top:361px;text-align:right;">balance</span><span class="t r" style="right:112.5px;top:361px;text-align:right;letter-spacing:0.350px;margin-right:-0.350px;">Deposit - ODA</span><span class="t r" style="right:5px;top:361px;text-align:right;">3 202.89</span><svg style="left:3px;top:385px" width="15" height="16" viewBox="0 0 15 16"><path d="M0.500 0.500h6.500l3.500 3.500v9.500h-10z" fill="#fff" stroke="#555" stroke-width="1"/><path d="M7 0.500v3.500h3.500" fill="none" stroke="#555" stroke-width="0.800"/><circle cx="10.500" cy="11.500" r="3.300" fill="#e8502a" stroke="#a8300f" stroke-width="0.700"/></svg><span class="t r" style="left:22.5px;top:382px">142118557</span><span class="t r" style="right:1126.2px;top:382px;text-align:right;letter-spacing:-0.100px;margin-right:0.100px;">2024.11.19 16:23:48</span><span class="t r" style="right:1034px;top:382px;text-align:right;">sell</span><span class="t r" style="right:959.7px;top:382px;text-align:right;">2.10</span><span class="t r" style="right:867.7px;top:382px;text-align:right;letter-spacing:0.350px;margin-right:-0.350px;">usdjpy</span><span class="t r" style="right:775.7px;top:382px;text-align:right;">153.984</span><span class="t r" style="right:683.7px;top:382px;text-align:right;">0.000</span><span class="t r" style="right:591.7px;top:382px;text-align:right;">0.000</span><span class="t r" style="right:388.70000000000005px;top:382px;text-align:right;letter-spacing:-0.100px;margin-right:0.100px;">2024.11.27 10:05:48</span><span class="t r" style="right:296.70000000000005px;top:382px;text-align:right;">151.675</span><span class="t r" style="right:204.70000000000005px;top:382px;text-align:right;">0.00</span><span class="t r" style="right:112.70000000000005px;top:382px;text-align:right;">0.00</span><span class="t r" style="right:5px;top:382px;text-align:right;">3 196.90</span><svg style="left:3px;top:406px" width="12" height="14" viewBox="0 0 12 14"><rect x="0.500" y="0.500" width="11" height="13" rx="1" fill="#fbfbfb" stroke="#555" stroke-width="1"/><path d="M6 3.200l3.600 3.800h-2.100v3.400h-3v-3.400h-2.100z" fill="#22b022" stroke="#0a7a0a" stroke-width="0.600"/></svg><span class="t r" style="left:22.5px;top:403px">142072486</span><span class="t r" style="right:1126.2px;top:403px;text-align:right;letter-spacing:-0.100px;margin-right:0.100px;">2024.10.23 12:25:04</span><span class="t r" style="right:1034px;top:403px;text-align:right;">balance</span><span class="t r" style="right:112.5px;top:403px;text-align:right;letter-spacing:0.350px;margin-right:-0.350px;">Deposit - ODA</span><span class="t r" style="right:5px;top:403px;text-align:right;">3 100.00</span><svg style="left:3px;top:427px" width="12" height="14" viewBox="0 0 12 14"><rect x="0.500" y="0.500" width="11" height="13" rx="1" fill="#fbfbfb" stroke="#555" stroke-width="1"/><path d="M6 3.200l3.600 3.800h-2.100v3.400h-3v-3.400h-2.100z" fill="#22b022" stroke="#0a7a0a" stroke-width="0.600"/></svg><span class="t r" style="left:22.5px;top:424px">142071998</span><span class="t r" style="right:1126.2px;top:424px;text-align:right;letter-spacing:-0.100px;margin-right:0.100px;">2024.10.23 07:37:47</span><span class="t r" style="right:1034px;top:424px;text-align:right;">balance</span><span class="t r" style="right:112.5px;top:424px;text-align:right;letter-spacing:0.350px;margin-right:-0.350px;">Deposit - ODA</span><span class="t r" style="right:5px;top:424px;text-align:right;">3 100.00</span><svg style="left:3px;top:448px" width="12" height="14" viewBox="0 0 12 14"><rect x="0.500" y="0.500" width="11" height="13" rx="1" fill="#fbfbfb" stroke="#555" stroke-width="1"/><path d="M6 3.200l3.600 3.800h-2.100v3.400h-3v-3.400h-2.100z" fill="#22b022" stroke="#0a7a0a" stroke-width="0.600"/></svg><span class="t r" style="left:22.5px;top:445px">142071734</span><span class="t r" style="right:1126.2px;top:445px;text-align:right;letter-spacing:-0.100px;margin-right:0.100px;">2024.10.23 04:26:12</span><span class="t r" style="right:1034px;top:445px;text-align:right;">balance</span><span class="t r" style="right:112.5px;top:445px;text-align:right;letter-spacing:0.350px;margin-right:-0.350px;">Deposit - ODA</span><span class="t r" style="right:5px;top:445px;text-align:right;">3 000.00</span><svg style="left:3px;top:469px" width="15" height="16" viewBox="0 0 15 16"><path d="M0.500 0.500h6.500l3.500 3.500v9.500h-10z" fill="#fff" stroke="#555" stroke-width="1"/><path d="M7 0.500v3.500h3.500" fill="none" stroke="#555" stroke-width="0.800"/><circle cx="10.500" cy="11.500" r="3.300" fill="#e8502a" stroke="#a8300f" stroke-width="0.700"/></svg><span class="t r" style="left:22.5px;top:466px">142116293</span><span class="t r" style="right:1126.2px;top:466px;text-align:right;letter-spacing:-0.100px;margin-right:0.100px;">2024.11.18 16:45:16</span><span class="t r" style="right:1034px;top:466px;text-align:right;">sell</span><span class="t r" style="right:959.7px;top:466px;text-align:right;">2.20</span><span class="t r" style="right:867.7px;top:466px;text-align:right;letter-spacing:0.350px;margin-right:-0.350px;">usdjpy</span><span class="t r" style="right:775.7px;top:466px;text-align:right;">154.750</span><span class="t r" style="right:683.7px;top:466px;text-align:right;">0.000</span><span class="t r" style="right:591.7px;top:466px;text-align:right;">0.000</span><span class="t r" style="right:388.70000000000005px;top:466px;text-align:right;letter-spacing:-0.100px;margin-right:0.100px;">2024.11.27 03:20:21</span><span class="t r" style="right:296.70000000000005px;top:466px;text-align:right;">152.716</span><span class="t r" style="right:204.70000000000005px;top:466px;text-align:right;">0.00</span><span class="t r" style="right:112.70000000000005px;top:466px;text-align:right;">0.00</span><span class="t r" style="right:5px;top:466px;text-align:right;">2 930.14</span><svg style="left:3px;top:490px" width="15" height="16" viewBox="0 0 15 16"><path d="M0.500 0.500h6.500l3.500 3.500v9.500h-10z" fill="#fff" stroke="#555" stroke-width="1"/><path d="M7 0.500v3.500h3.500" fill="none" stroke="#555" stroke-width="0.800"/><circle cx="10.500" cy="11.500" r="3.300" fill="#e8502a" stroke="#a8300f" stroke-width="0.700"/></svg><span class="t r" style="left:22.5px;top:487px">142116225</span><span class="t r" style="right:1126.2px;top:487px;text-align:right;letter-spacing:-0.100px;margin-right:0.100px;">2024.11.18 16:21:28</span><span class="t r" style="right:1034px;top:487px;text-align:right;">sell</span><span class="t r" style="right:959.7px;top:487px;text-align:right;">2.10</span><span class="t r" style="right:867.7px;top:487px;text-align:right;letter-spacing:0.350px;margin-right:-0.350px;">usdjpy</span><span class="t r" style="right:775.7px;top:487px;text-align:right;">154.834</span><span class="t r" style="right:683.7px;top:487px;text-align:right;">0.000</span><span class="t r" style="right:591.7px;top:487px;text-align:right;">0.000</span><span class="t r" style="right:388.70000000000005px;top:487px;text-align:right;letter-spacing:-0.100px;margin-right:0.100px;">2024.11.27 03:20:12</span><span class="t r" style="right:296.70000000000005px;top:487px;text-align:right;">152.735</span><span class="t r" style="right:204.70000000000005px;top:487px;text-align:right;">0.00</span><span class="t r" style="right:112.70000000000005px;top:487px;text-align:right;">0.00</span><span class="t r" style="right:5px;top:487px;text-align:right;">2 885.98</span><svg style="left:3px;top:511px" width="12" height="14" viewBox="0 0 12 14"><rect x="0.500" y="0.500" width="11" height="13" rx="1" fill="#fbfbfb" stroke="#555" stroke-width="1"/><path d="M6 3.200l3.600 3.800h-2.100v3.400h-3v-3.400h-2.100z" fill="#22b022" stroke="#0a7a0a" stroke-width="0.600"/></svg><span class="t r" style="left:22.5px;top:508px">142070113</span><span class="t r" style="right:1126.2px;top:508px;text-align:right;letter-spacing:-0.100px;margin-right:0.100px;">2024.10.22 06:23:04</span><span class="t r" style="right:1034px;top:508px;text-align:right;">balance</span><span class="t r" style="right:112.5px;top:508px;text-align:right;letter-spacing:0.350px;margin-right:-0.350px;">Deposit - ODA</span><span class="t r" style="right:5px;top:508px;text-align:right;">2 862.00</span></div><div style="left:1462px;top:393px;width:17px;height:519px;background:#f0f0f0;"></div><svg style="left:1466px;top:399px" width="9" height="6" viewBox="0 0 9 6"><path d="M0.700 5.300l3.800-3.800 3.800 3.800" fill="none" stroke="#505050" stroke-width="1.500"/></svg><svg style="left:1466px;top:901px" width="9" height="6" viewBox="0 0 9 6"><path d="M0.700 0.700l3.800 3.800 3.800-3.800" fill="none" stroke="#505050" stroke-width="1.500"/></svg><div style="left:1463px;top:410px;width:15px;height:17px;background:#cdcdcd;"></div><i style="left:17px;top:912px;width:1462px;height:1px;background:#000"></i><i style="left:1479px;top:392px;width:1px;height:521px;background:#fff"></i><i style="left:1462px;top:392px;width:17px;height:1px;background:#a0a0a0"></i>
<div style="left:17px;top:913px;width:1463px;height:22px;background:#f0f0f0;"></div><div style="left:108px;top:912px;width:68px;height:22px;background:#fff;border:1px solid #000;border-top:none;box-sizing:border-box;box-shadow:1px 1px 0 #888;"></div><span class="t" style="top:913px;height:20px;line-height:20px;font-size:12.2px;color:#000;left:109.0px;width:66px;text-align:center;">账户历史</span><span class="t" style="top:913px;height:20px;line-height:20px;font-size:12.2px;color:#707070;left:11.5px;width:60px;text-align:center;">交易</span><i style="left:64px;top:916px;width:1px;height:15px;background:#707070"></i><span class="t" style="top:913px;height:20px;line-height:20px;font-size:12.2px;color:#707070;left:55.0px;width:60px;text-align:center;">展示</span><span class="t" style="top:913px;height:20px;line-height:20px;font-size:12.2px;color:#707070;left:167.0px;width:60px;text-align:center;">新闻</span><i style="left:220px;top:916px;width:1px;height:15px;background:#707070"></i><span class="t" style="top:913px;height:20px;line-height:20px;font-size:12.2px;color:#707070;left:211.5px;width:60px;text-align:center;">警报</span><i style="left:264px;top:916px;width:1px;height:15px;background:#707070"></i><span class="t" style="top:913px;height:20px;line-height:20px;font-size:12.2px;color:#707070;left:255.5px;width:60px;text-align:center;">邮箱</span><i style="left:316px;top:916px;width:1px;height:15px;background:#707070"></i><span class="t" style="top:913px;height:20px;line-height:20px;font-size:12.2px;color:#707070;left:308.0px;width:60px;text-align:center;">市场</span><i style="left:360px;top:916px;width:1px;height:15px;background:#707070"></i><span class="t" style="top:913px;height:20px;line-height:20px;font-size:12.2px;color:#707070;left:352.0px;width:60px;text-align:center;">信号</span><i style="left:404px;top:916px;width:1px;height:15px;background:#707070"></i><span class="t" style="top:913px;height:20px;line-height:20px;font-size:12.2px;color:#707070;left:396.0px;width:60px;text-align:center;">文章</span><i style="left:448px;top:916px;width:1px;height:15px;background:#707070"></i><span class="t" style="top:913px;height:20px;line-height:20px;font-size:12.2px;color:#707070;left:446.0px;width:60px;text-align:center;">代码库</span><i style="left:503px;top:916px;width:1px;height:15px;background:#707070"></i><span class="t" style="top:913px;height:20px;line-height:20px;font-size:12.2px;color:#707070;left:491.5px;width:60px;text-align:center;">EA</span><i style="left:539px;top:916px;width:1px;height:15px;background:#707070"></i><span class="t" style="top:913px;height:20px;line-height:20px;font-size:12.2px;color:#707070;left:531.0px;width:60px;text-align:center;">日志</span><i style="left:583px;top:916px;width:1px;height:15px;background:#707070"></i><span class="t" style="top:920.5px;height:12px;line-height:12px;font-size:9.5px;color:#f02020;left:299.5px;font-weight:bold;">9</span><i style="left:2px;top:936px;width:1481px;height:1px;background:#fff"></i><i style="left:2px;top:939px;width:1481px;height:1px;background:#b4b4b4"></i>
<div style="left:2px;top:940px;width:1481px;height:23px;background:#f0f0f0;"></div><span class="t" style="top:943px;height:20px;line-height:20px;font-size:12.2px;color:#000;left:4px;letter-spacing:-0.292px;">寻求帮助,请按F1键</span><span class="t" style="top:943px;height:20px;line-height:20px;font-size:12.4px;color:#000;left:674px;">Default</span><i style="left:668px;top:944px;width:1px;height:17px;background:#a5a5a5"></i><i style="left:803px;top:944px;width:1px;height:17px;background:#a5a5a5"></i><i style="left:919px;top:944px;width:1px;height:17px;background:#a5a5a5"></i><i style="left:1002px;top:944px;width:1px;height:17px;background:#a5a5a5"></i><i style="left:1083px;top:944px;width:1px;height:17px;background:#a5a5a5"></i><i style="left:1162px;top:944px;width:1px;height:17px;background:#a5a5a5"></i><i style="left:1241px;top:944px;width:1px;height:17px;background:#a5a5a5"></i><i style="left:1319px;top:944px;width:1px;height:17px;background:#a5a5a5"></i><svg style="left:1325px;top:946px" width="24" height="12" viewBox="0 0 24 12"><rect x="0" y="0" width="2" height="10.0" fill="#5a7a10"/><rect x="0" y="10.0" width="2" height="2.0" fill="#0f3a5a"/><rect x="3" y="0" width="2" height="8.7" fill="#5a7a10"/><rect x="3" y="8.7" width="2" height="3.3" fill="#0f3a5a"/><rect x="6" y="0" width="2" height="7.4" fill="#5a7a10"/><rect x="6" y="7.4" width="2" height="4.6" fill="#0f3a5a"/><rect x="9" y="0" width="2" height="6.1" fill="#5a7a10"/><rect x="9" y="6.1" width="2" height="5.9" fill="#0f3a5a"/><rect x="12" y="0" width="2" height="4.8" fill="#5a7a10"/><rect x="12" y="4.8" width="2" height="7.2" fill="#0f3a5a"/><rect x="15" y="0" width="2" height="3.5" fill="#5a7a10"/><rect x="15" y="3.5" width="2" height="8.5" fill="#0f3a5a"/><rect x="18" y="0" width="2" height="2.2" fill="#5a7a10"/><rect x="18" y="2.2" width="2" height="9.8" fill="#0f3a5a"/><rect x="21" y="0" width="2" height="0.9" fill="#5a7a10"/><rect x="21" y="0.9" width="2" height="11.1" fill="#0f3a5a"/></svg><span class="t" style="top:943px;height:20px;line-height:20px;font-size:12.4px;color:#000;left:1352.5px;letter-spacing:0.269px;">600830/915 kb</span><svg style="left:1468px;top:948px" width="14" height="14" viewBox="0 0 14 14"><path d="M13 2L2 13M13 6L6 13M13 10L10 13" stroke="#b0b0b0" stroke-width="1"/></svg>
<svg style="left:0;top:0;pointer-events:none" width="1491" height="969" viewBox="0 0 1491 969"><defs><clipPath id="wmc"><rect x="0" y="10" width="1491" height="959"/></clipPath></defs><g fill="#b2b2b2" fill-opacity="0.400" clip-path="url(#wmc)"><path transform="translate(83 -33) rotate(-15)" d="M0 0Q-22 26 -72 22C-75 35 -76.500 47 -76.500 60C-76.500 110 -40 146 0 168C40 146 76.500 110 76.500 60C76.500 47 75 35 72 22Q22 26 0 0Z M-13.250 44h26.500v26.750h26.750v26.500h-26.750v26.750h-26.500v-26.750h-26.750v-26.500h26.750z" fill-rule="evenodd"/><path transform="translate(465 -136) rotate(-15)" d="M0 0Q-22 26 -72 22C-75 35 -76.500 47 -76.500 60C-76.500 110 -40 146 0 168C40 146 76.500 110 76.500 60C76.500 47 75 35 72 22Q22 26 0 0Z M-13.250 44h26.500v26.750h26.750v26.500h-26.750v26.750h-26.500v-26.750h-26.750v-26.500h26.750z" fill-rule="evenodd"/><path transform="translate(186 355) rotate(-15)" d="M0 0Q-22 26 -72 22C-75 35 -76.500 47 -76.500 60C-76.500 110 -40 146 0 168C40 146 76.500 110 76.500 60C76.500 47 75 35 72 22Q22 26 0 0Z M-13.250 44h26.500v26.750h26.750v26.500h-26.750v26.750h-26.500v-26.750h-26.750v-26.500h26.750z" fill-rule="evenodd"/><path transform="translate(567 253) rotate(-15)" d="M0 0Q-22 26 -72 22C-75 35 -76.500 47 -76.500 60C-76.500 110 -40 146 0 168C40 146 76.500 110 76.500 60C76.500 47 75 35 72 22Q22 26 0 0Z M-13.250 44h26.500v26.750h26.750v26.500h-26.750v26.750h-26.500v-26.750h-26.750v-26.500h26.750z" fill-rule="evenodd"/><path transform="translate(946 150.5) rotate(-15)" d="M0 0Q-22 26 -72 22C-75 35 -76.500 47 -76.500 60C-76.500 110 -40 146 0 168C40 146 76.500 110 76.500 60C76.500 47 75 35 72 22Q22 26 0 0Z M-13.250 44h26.500v26.750h26.750v26.500h-26.750v26.750h-26.500v-26.750h-26.750v-26.500h26.750z" fill-rule="evenodd"/><path transform="translate(1327.5 49.5) rotate(-15)" d="M0 0Q-22 26 -72 22C-75 35 -76.500 47 -76.500 60C-76.500 110 -40 146 0 168C40 146 76.500 110 76.500 60C76.500 47 75 35 72 22Q22 26 0 0Z M-13.250 44h26.500v26.750h26.750v26.500h-26.750v26.750h-26.500v-26.750h-26.750v-26.500h26.750z" fill-rule="evenodd"/><path transform="translate(70 798) rotate(-15)" d="M0 0Q-22 26 -72 22C-75 35 -76.500 47 -76.500 60C-76.500 110 -40 146 0 168C40 146 76.500 110 76.500 60C76.500 47 75 35 72 22Q22 26 0 0Z M-13.250 44h26.500v26.750h26.750v26.500h-26.750v26.750h-26.500v-26.750h-26.750v-26.500h26.750z" fill-rule="evenodd"/><path transform="translate(453.5 696) rotate(-15)" d="M0 0Q-22 26 -72 22C-75 35 -76.500 47 -76.500 60C-76.500 110 -40 146 0 168C40 146 76.500 110 76.500 60C76.500 47 75 35 72 22Q22 26 0 0Z M-13.250 44h26.500v26.750h26.750v26.500h-26.750v26.750h-26.500v-26.750h-26.750v-26.500h26.750z" fill-rule="evenodd"/><path transform="translate(834.5 594) rotate(-15)" d="M0 0Q-22 26 -72 22C-75 35 -76.500 47 -76.500 60C-76.500 110 -40 146 0 168C40 146 76.500 110 76.500 60C76.500 47 75 35 72 22Q22 26 0 0Z M-13.250 44h26.500v26.750h26.750v26.500h-26.750v26.750h-26.500v-26.750h-26.750v-26.500h26.750z" fill-rule="evenodd"/><path transform="translate(1215.5 492) rotate(-15)" d="M0 0Q-22 26 -72 22C-75 35 -76.500 47 -76.500 60C-76.500 110 -40 146 0 168C40 146 76.500 110 76.500 60C76.500 47 75 35 72 22Q22 26 0 0Z M-13.250 44h26.500v26.750h26.750v26.500h-26.750v26.750h-26.500v-26.750h-26.750v-26.500h26.750z" fill-rule="evenodd"/><path transform="translate(1156.4 921.3) rotate(-15)" d="M0 0Q-22 26 -72 22C-75 35 -76.500 47 -76.500 60C-76.500 110 -40 146 0 168C40 146 76.500 110 76.500 60C76.500 47 75 35 72 22Q22 26 0 0Z M-13.250 44h26.500v26.750h26.750v26.500h-26.750v26.750h-26.500v-26.750h-26.750v-26.500h26.750z" fill-rule="evenodd"/><path transform="translate(1537.7 819) rotate(-15)" d="M0 0Q-22 26 -72 22C-75 35 -76.500 47 -76.500 60C-76.500 110 -40 146 0 168C40 146 76.500 110 76.500 60C76.500 47 75 35 72 22Q22 26 0 0Z M-13.250 44h26.500v26.750h26.750v26.500h-26.750v26.750h-26.500v-26.750h-26.750v-26.500h26.750z" fill-rule="evenodd"/></g></svg></div></body></html>
